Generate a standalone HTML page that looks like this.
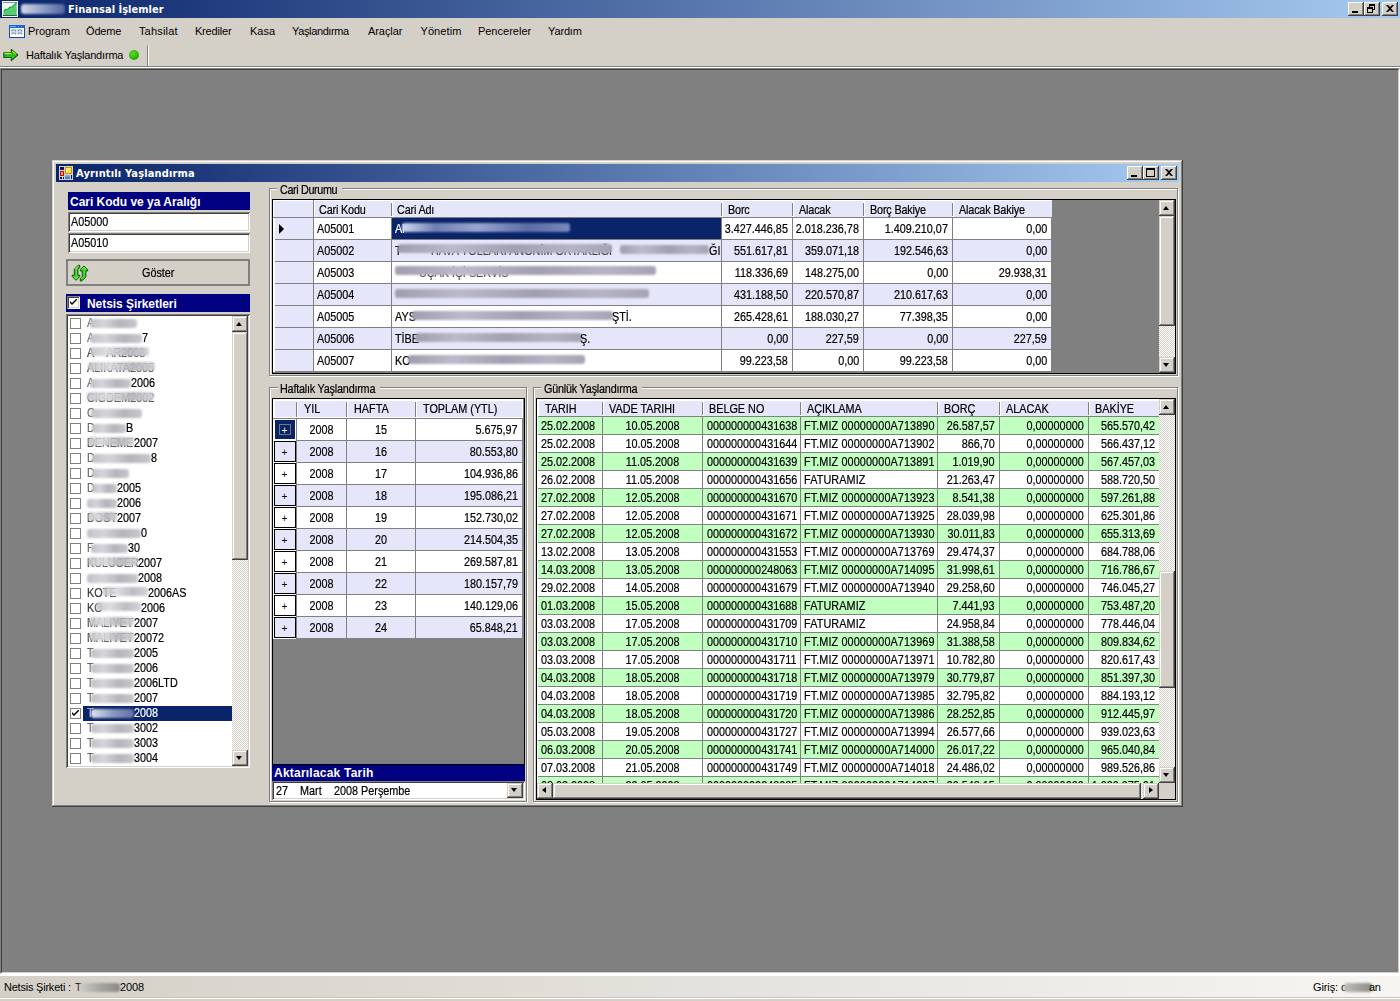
<!DOCTYPE html><html lang="tr"><head><meta charset="utf-8"><title>Finansal İşlemler</title><style>
*{box-sizing:border-box;margin:0;padding:0}
html,body{width:1400px;height:1001px;overflow:hidden;background:#d4d0c8}
body{position:relative;font-family:"Liberation Sans",sans-serif;font-size:11px;color:#000;line-height:1}
.a{position:absolute;white-space:nowrap}
.t{position:absolute;white-space:nowrap;line-height:13px;height:13px}
.th{font-family:"Liberation Sans",sans-serif;font-size:11px;letter-spacing:-0.32px}
.tb{font-family:"DejaVu Sans Condensed","Liberation Sans",sans-serif;font-weight:bold;font-size:11px;color:#fff}
.lb{position:absolute;background:#000080;color:#fff;font-weight:bold;font-size:12px;white-space:nowrap;overflow:hidden}
.lb span{position:absolute;line-height:14px;letter-spacing:-0.1px}
.g{font-size:13px;letter-spacing:0;transform:scaleX(.832);transform-origin:0 50%;-webkit-text-stroke:.22px currentColor}
.btn{position:absolute;background:#d4d0c8;box-shadow:inset -1px -1px #404040,inset 1px 1px #fff,inset -2px -2px #808080,inset 2px 2px #d4d0c8}
.sb{position:absolute;background:#d4d0c8;box-shadow:inset -1px -1px #404040,inset 1px 1px #d4d0c8,inset -2px -2px #808080,inset 2px 2px #fff}
.trk{position:absolute;background:repeating-conic-gradient(#fff 0% 25%,#d4d0c8 0% 50%) 0 0/2px 2px}
.sunk{position:absolute;background:#fff;box-shadow:inset 1px 1px #808080,inset -1px -1px #fff,inset 2px 2px #404040,inset -2px -2px #d4d0c8}
.grp{position:absolute;border:1px solid #808080;box-shadow:inset 1px 1px #fff,1px 1px #fff}
.grp>span{position:absolute;top:-6px;height:13px;background:#d4d0c8;line-height:13px;white-space:nowrap;font-size:13px}
.grp>span>i{font-style:normal;position:absolute;left:2.5px;top:0;letter-spacing:-0.25px;transform:scaleX(.832);transform-origin:0 50%;-webkit-text-stroke:.22px currentColor}
.grid{position:absolute;background:#808080;border:1px solid #000;overflow:hidden}
.c{position:absolute;white-space:nowrap;overflow:hidden;font-size:13px;letter-spacing:0}
.c i{font-style:normal;position:absolute;top:0;line-height:inherit;transform:scaleX(.832);-webkit-text-stroke:.22px currentColor}
.hl{position:absolute;background:#808080}
.bl{display:inline-block;vertical-align:middle;filter:blur(1.1px);border-radius:3px}
.tri{position:absolute;width:0;height:0}
</style></head><body>
<div class="a" style="left:0px;top:0px;width:1400px;height:18px;background:linear-gradient(90deg,#0a246a 0%,#a6caf0 100%);"></div>
<svg class="a" style="left:2px;top:1px" width="16" height="16" viewBox="0 0 16 16"><defs><linearGradient id="ai" x1="0" y1="0" x2="1" y2="1"><stop offset="0" stop-color="#e8f4f8"/><stop offset=".5" stop-color="#f8fcff"/><stop offset="1" stop-color="#d0ecd8"/></linearGradient></defs><rect width="16" height="16" fill="#fff"/><rect x="1" y="1" width="14" height="14" fill="url(#ai)"/><path d="M1.3 15V10.6L3.3 8.6L6 8L8 6L9.6 6.2L14.7 1.6V15Z" fill="#58cc74"/><path d="M1.8 10.2L3.3 8.6L6 8L8 6L9.6 6.2L14.4 1.9" stroke="#18a838" stroke-width="1.1" fill="none"/><rect x="1" y="1" width="14" height="1" fill="#707870" opacity=".8"/><rect x="1" y="14" width="14" height="1" fill="#286838"/></svg>
<div class="a" style="left:21px;top:4px;width:44px;height:10px;background:linear-gradient(90deg,#e8ecf6,#8f9fc6 60%,#5a6da6);filter:blur(1.2px);border-radius:3px;opacity:.9"></div>
<div class="t tb" style="left:68px;top:3px;letter-spacing:0.02px">Finansal İşlemler</div>
<div class="btn" style="left:1348px;top:2px;width:16px;height:14px"></div>
<div class="btn" style="left:1364px;top:2px;width:16px;height:14px"></div>
<div class="btn" style="left:1382px;top:2px;width:16px;height:14px"></div>
<div class="a" style="left:1352px;top:11px;width:6px;height:2px;background:#000;"></div>
<div class="a" style="left:1369px;top:4px;width:6px;height:6px;background:transparent;border:1px solid #000;border-top-width:2px"></div>
<div class="a" style="left:1367px;top:7px;width:6px;height:6px;background:#d4d0c8;border:1px solid #000;border-top-width:2px"></div>
<svg class="a" style="left:1386px;top:5px" width="8" height="7" viewBox="0 0 8 7"><path d="M0 0h2l2 2 2-2h2L5 3.5 8 7H6L4 5 2 7H0l3-3.5z" fill="#000"/></svg>
<svg class="a" style="left:9px;top:25px" width="16" height="13" viewBox="0 0 16 13"><rect width="16" height="13" fill="#0c48c0"/><rect x="0" y="0" width="16" height="3" fill="#1068e0"/><rect x="1" y="1" width="6" height="1" fill="#70b0f8"/><rect x="9" y="1" width="1" height="1" fill="#70b0f8"/><rect x="12" y="1" width="1" height="1" fill="#58a0f0"/><rect x="13" y="1" width="2" height="1" fill="#f02010"/><rect x="1" y="3" width="14" height="9" fill="#fff"/><rect x="2" y="4" width="12" height="5" fill="#d4ecfc"/><path d="M3 6.5V5h3.5v1.5M9 6.5V5h3.5v1.5M3 9.5V8h3.5v1.5M9 9.5V8h3.5v1.5" stroke="#8c8c90" stroke-width="1" fill="none"/></svg>
<div class="t th" style="left:28.0px;top:24.5px;letter-spacing:-0.06px">Program</div>
<div class="t th" style="left:86.0px;top:24.5px;letter-spacing:-0.15px">Ödeme</div>
<div class="t th" style="left:138.9px;top:24.5px;letter-spacing:0.19px">Tahsilat</div>
<div class="t th" style="left:194.9px;top:24.5px;letter-spacing:-0.15px">Krediler</div>
<div class="t th" style="left:249.9px;top:24.5px;letter-spacing:0.08px">Kasa</div>
<div class="t th" style="left:292.1px;top:24.5px;letter-spacing:-0.38px">Yaşlandırma</div>
<div class="t th" style="left:368.0px;top:24.5px;letter-spacing:-0.07px">Araçlar</div>
<div class="t th" style="left:420.5px;top:24.5px;letter-spacing:0.08px">Yönetim</div>
<div class="t th" style="left:477.9px;top:24.5px;letter-spacing:0.01px">Pencereler</div>
<div class="t th" style="left:548.1px;top:24.5px;letter-spacing:-0.16px">Yardım</div>
<svg class="a" style="left:3px;top:48px" width="16" height="14" viewBox="0 0 16 14"><defs><linearGradient id="ga" x1="0" y1="0" x2="0" y2="1"><stop offset="0" stop-color="#48d030"/><stop offset=".5" stop-color="#22b422"/><stop offset="1" stop-color="#58e048"/></linearGradient></defs><path d="M0.8 4.7H8.3V1.4L14.7 7L8.3 12.6V9.5H0.8Z" fill="url(#ga)" stroke="#076207" stroke-width="1.1" stroke-linejoin="round"/><path d="M1.6 5.6H8.6M9.2 3L13.2 6.5" stroke="#f2ff18" stroke-width="1" fill="none"/></svg>
<div class="t th" style="left:26px;top:48.5px;letter-spacing:-0.19px">Haftalık Yaşlandırma</div>
<div class="a" style="left:129px;top:50px;width:10px;height:10px;border-radius:50%;background:radial-gradient(circle at 40% 35%,#58e020,#2aa808 70%,#1e8a06)"></div>
<div class="a" style="left:147px;top:45px;width:1px;height:21px;background:#808080;"></div>
<div class="a" style="left:148px;top:45px;width:1px;height:21px;background:#fff;"></div>
<div class="a" style="left:0px;top:66px;width:1400px;height:1px;background:#808080;"></div>
<div class="a" style="left:0px;top:67px;width:1400px;height:1px;background:#fff;"></div>
<div class="a" style="left:0px;top:68px;width:1400px;height:906px;background:#808080;border-left:1px solid #808080;border-top:1px solid #808080;border-right:1px solid #fff;border-bottom:1px solid #fff"></div>
<div class="a" style="left:1px;top:69px;width:1398px;height:904px;background:#808080;border-left:1px solid #404040;border-top:1px solid #404040;border-right:1px solid #d4d0c8;border-bottom:1px solid #d4d0c8"></div>
<div class="a" style="left:0px;top:974px;width:1400px;height:2px;background:#fff;"></div>
<div class="a" style="left:0px;top:976px;width:1400px;height:22px;background:linear-gradient(90deg,#d4d0c8 0%,#e4e2dc 50%,#f6f5f2 100%);"></div>
<div class="a" style="left:0px;top:997px;width:1400px;height:1px;background:#c8c5bd;"></div>
<div class="a" style="left:0px;top:998px;width:1400px;height:1px;background:#fff;"></div>
<div class="a" style="left:0px;top:999px;width:1400px;height:2px;background:#d4d0c8;"></div>
<div class="t th" style="left:4px;top:980.5px;letter-spacing:-0.22px">Netsis Şirketi :</div>
<div class="t th" style="left:75px;top:980.5px;">T</div>
<div class="a" style="left:79px;top:983px;width:41px;height:9px;background:linear-gradient(90deg,#d0cec8,#a8a6a2 50%,#8c8a88);filter:blur(1.1px);border-radius:3px"></div>
<div class="t th" style="left:120px;top:980.5px;letter-spacing:-0.15px">2008</div>
<div class="t th" style="left:1313px;top:980.5px;letter-spacing:-0.1px">Giriş:</div>
<div class="t th" style="left:1341px;top:980.5px;">o</div>
<div class="a" style="left:1344px;top:983px;width:28px;height:9px;background:linear-gradient(90deg,#c0beba,#8e8c8a);filter:blur(1.1px);border-radius:3px"></div>
<div class="t th" style="left:1369px;top:980.5px;">an</div>
<div class="a" style="left:52px;top:160px;width:1131px;height:647px;background:#d4d0c8;box-shadow:inset -1px -1px #404040,inset 1px 1px #d4d0c8,inset -2px -2px #808080,inset 2px 2px #fff"></div>
<div class="a" style="left:56px;top:164px;width:1123px;height:18px;background:linear-gradient(90deg,#0a246a 0%,#a6caf0 100%);"></div>
<svg class="a" style="left:59px;top:166px" width="14" height="14" viewBox="59 166 14 14"><defs><linearGradient id="gy" x1="0" y1="0" x2="1" y2="1"><stop offset="0" stop-color="#fff4c0"/><stop offset="1" stop-color="#ffce20"/></linearGradient><linearGradient id="gb" x1="0" y1="0" x2="0" y2="1"><stop offset="0" stop-color="#8ab8f4"/><stop offset="1" stop-color="#3a6cd0"/></linearGradient></defs><rect x="59" y="166" width="14" height="14" fill="#d6d2ca"/><rect x="60" y="167" width="4" height="3" fill="#06185c"/><rect x="65" y="167" width="7" height="7" fill="#c89400"/><rect x="66" y="168" width="5" height="5" fill="url(#gy)"/><rect x="60" y="171" width="4" height="5" fill="#b81808"/><rect x="61" y="172" width="2" height="3" fill="#f08878"/><rect x="65" y="175" width="5" height="4" fill="url(#gb)"/><rect x="60" y="177" width="2" height="2" fill="#06185c"/><rect x="63" y="177" width="1" height="2" fill="#06185c"/><rect x="71" y="175" width="1" height="4" fill="#06185c"/></svg>
<div class="t tb" style="left:76px;top:167px;letter-spacing:0.16px">Ayrıntılı Yaşlandırma</div>
<div class="btn" style="left:1127px;top:166px;width:16px;height:14px"></div>
<div class="btn" style="left:1143px;top:166px;width:16px;height:14px"></div>
<div class="btn" style="left:1161px;top:166px;width:16px;height:14px"></div>
<div class="a" style="left:1131px;top:175px;width:6px;height:2px;background:#000;"></div>
<div class="a" style="left:1146px;top:168px;width:9px;height:9px;background:transparent;border:1px solid #000;border-top-width:2px"></div>
<svg class="a" style="left:1165px;top:169px" width="8" height="7" viewBox="0 0 8 7"><path d="M0 0h2l2 2 2-2h2L5 3.5 8 7H6L4 5 2 7H0l3-3.5z" fill="#000"/></svg>
<div class="lb" style="left:68px;top:192px;width:182px;height:18px"><span style="left:2px;top:3px;letter-spacing:-0.02px">Cari Kodu ve ya Aralığı</span></div>
<div class="sunk" style="left:68px;top:212px;width:182px;height:20px"></div>
<div class="t g" style="left:71px;top:215px;">A05000</div>
<div class="sunk" style="left:68px;top:233px;width:182px;height:20px"></div>
<div class="t g" style="left:71px;top:236px;">A05010</div>
<div class="a" style="left:66px;top:259px;width:184px;height:27px;background:#d4d0c8;border:2px solid #808080"></div>
<svg class="a" style="left:71px;top:264px" width="18" height="18" viewBox="71 264 18 18"><defs><linearGradient id="gr" x1="0" y1="0" x2="1" y2="0"><stop offset="0" stop-color="#0f9a14"/><stop offset=".55" stop-color="#4fdc40"/><stop offset="1" stop-color="#18a81c"/></linearGradient></defs><path d="M78.3 265.3H79.7V267.6L77.8 269.6V275.2H79.7V276.6L76 280.3L72.3 276.6V275.2H74.3V269.2Z" fill="url(#gr)" stroke="#005c04" stroke-width="1" stroke-linejoin="round"/><path d="M84 266L87.7 269.6V270.9H85.8V277L81.6 281H80.3V278.6L82.2 276.6V270.9H80.3V269.6Z" fill="url(#gr)" stroke="#005c04" stroke-width="1" stroke-linejoin="round"/><path d="M75 269.2L78.8 265.9M73.4 276.4L76 279L78.6 276.4M81.3 269.7L84 267.1L86.7 269.7M81.2 278.6L83.2 276.6" stroke="#f4ff20" stroke-width=".9" fill="none" stroke-dasharray="1 .45"/></svg>
<div class="t g" style="left:141.5px;top:266px;">Göster</div>
<div class="lb" style="left:66px;top:294px;width:184px;height:18px"><span style="left:21px;top:3px;letter-spacing:-0.06px">Netsis Şirketleri</span></div>
<div class="sunk" style="left:67px;top:296px;width:13px;height:13px"></div>
<svg class="a" style="left:70px;top:299px" width="7" height="7" viewBox="0 0 7 7"><path d="M0 2v2l2 2 5-5V-1L2 4z" fill="#000"/></svg>
<div class="sunk" style="left:66px;top:314px;width:184px;height:454px"></div>
<div class="a" style="left:70px;top:318px;width:11px;height:11px;background:#fff;border:1px solid #808080"></div>
<div class="t g" style="left:87px;top:316px;opacity:.6">A</div>
<div class="a" style="left:90px;top:319px;width:47px;height:9px;background:linear-gradient(90deg,#c0c0c6,#d4d4da 30%,#b4b4ba 65%,#c8c8ce);filter:blur(1.1px);border-radius:3px"></div>
<div class="a" style="left:70px;top:333px;width:11px;height:11px;background:#fff;border:1px solid #808080"></div>
<div class="t g" style="left:87px;top:331px;opacity:.6">A</div>
<div class="a" style="left:90px;top:334px;width:52px;height:9px;background:linear-gradient(90deg,#c0c0c6,#d4d4da 30%,#b4b4ba 65%,#c8c8ce);filter:blur(1.1px);border-radius:3px"></div>
<div class="t g" style="left:142px;top:331px;">7</div>
<div class="a" style="left:70px;top:348px;width:11px;height:11px;background:#fff;border:1px solid #808080"></div>
<div class="t g" style="left:87px;top:346px;opacity:.8;filter:blur(.3px)">A&nbsp;&nbsp;&nbsp;&nbsp;AR2008</div>
<div class="a" style="left:90px;top:347px;width:59px;height:8.5px;background:linear-gradient(90deg,#c4c4ca,#dcdce0 30%,#b8b8be 65%,#d0d0d6);filter:blur(.9px);border-radius:3px;opacity:.93"></div>
<div class="a" style="left:70px;top:363px;width:11px;height:11px;background:#fff;border:1px solid #808080"></div>
<div class="t g" style="left:87px;top:361px;opacity:.8;filter:blur(.3px)">ALIKATA2005</div>
<div class="a" style="left:88px;top:362px;width:67px;height:8.5px;background:linear-gradient(90deg,#c4c4ca,#dcdce0 30%,#b8b8be 65%,#d0d0d6);filter:blur(.9px);border-radius:3px;opacity:.93"></div>
<div class="a" style="left:70px;top:378px;width:11px;height:11px;background:#fff;border:1px solid #808080"></div>
<div class="t g" style="left:87px;top:376px;opacity:.6">A</div>
<div class="a" style="left:90px;top:379px;width:41px;height:9px;background:linear-gradient(90deg,#c0c0c6,#d4d4da 30%,#b4b4ba 65%,#c8c8ce);filter:blur(1.1px);border-radius:3px"></div>
<div class="t g" style="left:131px;top:376px;">2006</div>
<div class="a" style="left:70px;top:393px;width:11px;height:11px;background:#fff;border:1px solid #808080"></div>
<div class="t g" style="left:87px;top:391px;opacity:.8;filter:blur(.3px)">CIGDEM2002</div>
<div class="a" style="left:87px;top:392px;width:67px;height:8.5px;background:linear-gradient(90deg,#c4c4ca,#dcdce0 30%,#b8b8be 65%,#d0d0d6);filter:blur(.9px);border-radius:3px;opacity:.93"></div>
<div class="a" style="left:70px;top:408px;width:11px;height:11px;background:#fff;border:1px solid #808080"></div>
<div class="t g" style="left:87px;top:406px;opacity:.6">C</div>
<div class="a" style="left:91px;top:409px;width:51px;height:9px;background:linear-gradient(90deg,#c0c0c6,#d4d4da 30%,#b4b4ba 65%,#c8c8ce);filter:blur(1.1px);border-radius:3px"></div>
<div class="a" style="left:70px;top:423px;width:11px;height:11px;background:#fff;border:1px solid #808080"></div>
<div class="t g" style="left:87px;top:421px;opacity:.6">D</div>
<div class="a" style="left:92px;top:424px;width:34px;height:9px;background:linear-gradient(90deg,#c0c0c6,#d4d4da 30%,#b4b4ba 65%,#c8c8ce);filter:blur(1.1px);border-radius:3px"></div>
<div class="t g" style="left:125.7px;top:421px;">B</div>
<div class="a" style="left:70px;top:438px;width:11px;height:11px;background:#fff;border:1px solid #808080"></div>
<div class="t g" style="left:87px;top:436px;opacity:.8;filter:blur(.3px)">DENEME</div>
<div class="a" style="left:88px;top:437px;width:45.599999999999994px;height:8.5px;background:linear-gradient(90deg,#c4c4ca,#dcdce0 30%,#b8b8be 65%,#d0d0d6);filter:blur(.9px);border-radius:3px;opacity:.93"></div>
<div class="t g" style="left:133.6px;top:436px;">2007</div>
<div class="a" style="left:70px;top:453px;width:11px;height:11px;background:#fff;border:1px solid #808080"></div>
<div class="t g" style="left:87px;top:451px;opacity:.6">D</div>
<div class="a" style="left:92px;top:454px;width:58.69999999999999px;height:9px;background:linear-gradient(90deg,#c0c0c6,#d4d4da 30%,#b4b4ba 65%,#c8c8ce);filter:blur(1.1px);border-radius:3px"></div>
<div class="t g" style="left:150.7px;top:451px;">8</div>
<div class="a" style="left:70px;top:468px;width:11px;height:11px;background:#fff;border:1px solid #808080"></div>
<div class="t g" style="left:87px;top:466px;opacity:.6">D</div>
<div class="a" style="left:92px;top:469px;width:37px;height:9px;background:linear-gradient(90deg,#c0c0c6,#d4d4da 30%,#b4b4ba 65%,#c8c8ce);filter:blur(1.1px);border-radius:3px"></div>
<div class="a" style="left:70px;top:483px;width:11px;height:11px;background:#fff;border:1px solid #808080"></div>
<div class="t g" style="left:87px;top:481px;opacity:.6">D</div>
<div class="a" style="left:92px;top:484px;width:25px;height:9px;background:linear-gradient(90deg,#c0c0c6,#d4d4da 30%,#b4b4ba 65%,#c8c8ce);filter:blur(1.1px);border-radius:3px"></div>
<div class="t g" style="left:116.8px;top:481px;">2005</div>
<div class="a" style="left:70px;top:498px;width:11px;height:11px;background:#fff;border:1px solid #808080"></div>
<div class="a" style="left:86.5px;top:499px;width:30.5px;height:9px;background:linear-gradient(90deg,#c0c0c6,#d4d4da 30%,#b4b4ba 65%,#c8c8ce);filter:blur(1.1px);border-radius:3px"></div>
<div class="t g" style="left:116.8px;top:496px;">2006</div>
<div class="a" style="left:70px;top:513px;width:11px;height:11px;background:#fff;border:1px solid #808080"></div>
<div class="t g" style="left:87px;top:511px;opacity:.8;filter:blur(.3px)">DOST</div>
<div class="a" style="left:88px;top:512px;width:29px;height:8.5px;background:linear-gradient(90deg,#c4c4ca,#dcdce0 30%,#b8b8be 65%,#d0d0d6);filter:blur(.9px);border-radius:3px;opacity:.93"></div>
<div class="t g" style="left:116.8px;top:511px;">2007</div>
<div class="a" style="left:70px;top:528px;width:11px;height:11px;background:#fff;border:1px solid #808080"></div>
<div class="a" style="left:87px;top:529px;width:53.5px;height:9px;background:linear-gradient(90deg,#c0c0c6,#d4d4da 30%,#b4b4ba 65%,#c8c8ce);filter:blur(1.1px);border-radius:3px"></div>
<div class="t g" style="left:140.5px;top:526px;">0</div>
<div class="a" style="left:70px;top:543px;width:11px;height:11px;background:#fff;border:1px solid #808080"></div>
<div class="t g" style="left:87px;top:541px;opacity:.6">F</div>
<div class="a" style="left:91px;top:544px;width:36.5px;height:9px;background:linear-gradient(90deg,#c0c0c6,#d4d4da 30%,#b4b4ba 65%,#c8c8ce);filter:blur(1.1px);border-radius:3px"></div>
<div class="t g" style="left:127.5px;top:541px;">30</div>
<div class="a" style="left:70px;top:558px;width:11px;height:11px;background:#fff;border:1px solid #808080"></div>
<div class="t g" style="left:87px;top:556px;opacity:.8;filter:blur(.3px)">KULUCER</div>
<div class="a" style="left:88px;top:557px;width:50px;height:8.5px;background:linear-gradient(90deg,#c4c4ca,#dcdce0 30%,#b8b8be 65%,#d0d0d6);filter:blur(.9px);border-radius:3px;opacity:.93"></div>
<div class="t g" style="left:138px;top:556px;">2007</div>
<div class="a" style="left:70px;top:573px;width:11px;height:11px;background:#fff;border:1px solid #808080"></div>
<div class="a" style="left:87px;top:574px;width:51px;height:9px;background:linear-gradient(90deg,#c0c0c6,#d4d4da 30%,#b4b4ba 65%,#c8c8ce);filter:blur(1.1px);border-radius:3px"></div>
<div class="t g" style="left:138px;top:571px;">2008</div>
<div class="a" style="left:70px;top:588px;width:11px;height:11px;background:#fff;border:1px solid #808080"></div>
<div class="t g" style="left:87px;top:586px;opacity:.8;filter:blur(.3px)">KOTE</div>
<div class="a" style="left:103px;top:587px;width:45px;height:8.5px;background:linear-gradient(90deg,#c4c4ca,#dcdce0 30%,#b8b8be 65%,#d0d0d6);filter:blur(.9px);border-radius:3px;opacity:.93"></div>
<div class="t g" style="left:148px;top:586px;">2006AS</div>
<div class="a" style="left:70px;top:603px;width:11px;height:11px;background:#fff;border:1px solid #808080"></div>
<div class="t g" style="left:87px;top:601px;opacity:.8;filter:blur(.3px)">KO</div>
<div class="a" style="left:96px;top:602px;width:44.5px;height:8.5px;background:linear-gradient(90deg,#c4c4ca,#dcdce0 30%,#b8b8be 65%,#d0d0d6);filter:blur(.9px);border-radius:3px;opacity:.93"></div>
<div class="t g" style="left:140.5px;top:601px;">2006</div>
<div class="a" style="left:70px;top:618px;width:11px;height:11px;background:#fff;border:1px solid #808080"></div>
<div class="t g" style="left:87px;top:616px;opacity:.8;filter:blur(.3px)">MALIYET</div>
<div class="a" style="left:89px;top:617px;width:44.599999999999994px;height:8.5px;background:linear-gradient(90deg,#c4c4ca,#dcdce0 30%,#b8b8be 65%,#d0d0d6);filter:blur(.9px);border-radius:3px;opacity:.93"></div>
<div class="t g" style="left:133.6px;top:616px;">2007</div>
<div class="a" style="left:70px;top:633px;width:11px;height:11px;background:#fff;border:1px solid #808080"></div>
<div class="t g" style="left:87px;top:631px;opacity:.8;filter:blur(.3px)">MALIYET</div>
<div class="a" style="left:89px;top:632px;width:44.599999999999994px;height:8.5px;background:linear-gradient(90deg,#c4c4ca,#dcdce0 30%,#b8b8be 65%,#d0d0d6);filter:blur(.9px);border-radius:3px;opacity:.93"></div>
<div class="t g" style="left:133.6px;top:631px;">20072</div>
<div class="a" style="left:70px;top:648px;width:11px;height:11px;background:#fff;border:1px solid #808080"></div>
<div class="t g" style="left:87px;top:646px;opacity:.6">T</div>
<div class="a" style="left:91px;top:649px;width:42.599999999999994px;height:9px;background:linear-gradient(90deg,#c0c0c6,#d4d4da 30%,#b4b4ba 65%,#c8c8ce);filter:blur(1.1px);border-radius:3px"></div>
<div class="t g" style="left:133.6px;top:646px;">2005</div>
<div class="a" style="left:70px;top:663px;width:11px;height:11px;background:#fff;border:1px solid #808080"></div>
<div class="t g" style="left:87px;top:661px;opacity:.6">T</div>
<div class="a" style="left:91px;top:664px;width:42.599999999999994px;height:9px;background:linear-gradient(90deg,#c0c0c6,#d4d4da 30%,#b4b4ba 65%,#c8c8ce);filter:blur(1.1px);border-radius:3px"></div>
<div class="t g" style="left:133.6px;top:661px;">2006</div>
<div class="a" style="left:70px;top:678px;width:11px;height:11px;background:#fff;border:1px solid #808080"></div>
<div class="t g" style="left:87px;top:676px;opacity:.6">T</div>
<div class="a" style="left:91px;top:679px;width:42.599999999999994px;height:9px;background:linear-gradient(90deg,#c0c0c6,#d4d4da 30%,#b4b4ba 65%,#c8c8ce);filter:blur(1.1px);border-radius:3px"></div>
<div class="t g" style="left:133.6px;top:676px;">2006LTD</div>
<div class="a" style="left:70px;top:693px;width:11px;height:11px;background:#fff;border:1px solid #808080"></div>
<div class="t g" style="left:87px;top:691px;opacity:.6">T</div>
<div class="a" style="left:91px;top:694px;width:42.599999999999994px;height:9px;background:linear-gradient(90deg,#c0c0c6,#d4d4da 30%,#b4b4ba 65%,#c8c8ce);filter:blur(1.1px);border-radius:3px"></div>
<div class="t g" style="left:133.6px;top:691px;">2007</div>
<div class="a" style="left:83px;top:706px;width:149px;height:15px;background:#0a246a;"></div>
<div class="a" style="left:70px;top:708px;width:11px;height:11px;background:#fff;border:1px solid #808080"></div>
<svg class="a" style="left:72px;top:710px" width="7" height="7" viewBox="0 0 7 7"><path d="M0 2v2l2 2 5-5V-1L2 4z" fill="#000"/></svg>
<div class="t g" style="left:87px;top:706px;color:#fff;opacity:.6">T</div>
<div class="a" style="left:91px;top:709px;width:42.599999999999994px;height:9px;background:linear-gradient(90deg,#e0e4f0,#8c98c0 50%,#6070a8);filter:blur(1.1px);border-radius:3px"></div>
<div class="t g" style="left:133.6px;top:706px;color:#fff">2008</div>
<div class="a" style="left:70px;top:723px;width:11px;height:11px;background:#fff;border:1px solid #808080"></div>
<div class="t g" style="left:87px;top:721px;opacity:.6">T</div>
<div class="a" style="left:91px;top:724px;width:42.599999999999994px;height:9px;background:linear-gradient(90deg,#c0c0c6,#d4d4da 30%,#b4b4ba 65%,#c8c8ce);filter:blur(1.1px);border-radius:3px"></div>
<div class="t g" style="left:133.6px;top:721px;">3002</div>
<div class="a" style="left:70px;top:738px;width:11px;height:11px;background:#fff;border:1px solid #808080"></div>
<div class="t g" style="left:87px;top:736px;opacity:.6">T</div>
<div class="a" style="left:91px;top:739px;width:42.599999999999994px;height:9px;background:linear-gradient(90deg,#c0c0c6,#d4d4da 30%,#b4b4ba 65%,#c8c8ce);filter:blur(1.1px);border-radius:3px"></div>
<div class="t g" style="left:133.6px;top:736px;">3003</div>
<div class="a" style="left:70px;top:753px;width:11px;height:11px;background:#fff;border:1px solid #808080"></div>
<div class="t g" style="left:87px;top:751px;opacity:.6">T</div>
<div class="a" style="left:91px;top:754px;width:42.599999999999994px;height:9px;background:linear-gradient(90deg,#c0c0c6,#d4d4da 30%,#b4b4ba 65%,#c8c8ce);filter:blur(1.1px);border-radius:3px"></div>
<div class="t g" style="left:133.6px;top:751px;">3004</div>
<div class="trk" style="left:232px;top:316px;width:16px;height:450px"></div>
<div class="sb" style="left:232px;top:316px;width:16px;height:16px"></div>
<div class="tri" style="left:236px;top:322px;border-left:3.5px solid transparent;border-right:3.5px solid transparent;border-bottom:4px solid #000"></div>
<div class="sb" style="left:232px;top:750px;width:16px;height:16px"></div>
<div class="tri" style="left:236px;top:756px;border-left:3.5px solid transparent;border-right:3.5px solid transparent;border-top:4px solid #000"></div>
<div class="sb" style="left:232px;top:332px;width:16px;height:228px"></div>
<div class="grp" style="left:269px;top:188px;width:909px;height:188px"><span style="left:7px;width:65px"><i style="letter-spacing:-0.45px">Cari Durumu</i></span></div>
<div class="grp" style="left:269px;top:387px;width:258px;height:415px"><span style="left:8px;width:102px"><i style="left:1.5px">Haftalık Yaşlandırma</i></span></div>
<div class="grp" style="left:533px;top:387px;width:645px;height:415px"><span style="left:7px;width:101px"><i>Günlük Yaşlandırma</i></span></div>
<div class="a" style="left:272px;top:199px;width:904px;height:175px;background:#808080;border:1px solid #000"></div>
<div class="a" style="left:273px;top:200px;width:779px;height:17px;background:#fff;"></div>
<div class="c" style="left:274px;top:201px;width:39px;height:16px;background:#e6e6fa;line-height:18px;color:#000;letter-spacing:-0.2px;"><i style="left:4px;transform-origin:0 50%"></i></div>
<div class="a" style="left:313px;top:200px;width:1px;height:17px;background:#808080;"></div>
<div class="c" style="left:315px;top:201px;width:76px;height:16px;background:#e6e6fa;line-height:18px;color:#000;letter-spacing:-0.2px;"><i style="left:4px;transform-origin:0 50%">Cari Kodu</i></div>
<div class="a" style="left:391px;top:203px;width:1px;height:13px;background:#808080;"></div>
<div class="c" style="left:393px;top:201px;width:328px;height:16px;background:#e6e6fa;line-height:18px;color:#000;letter-spacing:-0.2px;"><i style="left:4px;transform-origin:0 50%">Cari Adı</i></div>
<div class="a" style="left:721px;top:203px;width:1px;height:13px;background:#808080;"></div>
<div class="c" style="left:723px;top:201px;width:69px;height:16px;background:#e6e6fa;line-height:18px;color:#000;letter-spacing:-0.2px;"><i style="left:5px;transform-origin:0 50%">Borc</i></div>
<div class="a" style="left:792px;top:203px;width:1px;height:13px;background:#808080;"></div>
<div class="c" style="left:794px;top:201px;width:69px;height:16px;background:#e6e6fa;line-height:18px;color:#000;letter-spacing:-0.2px;"><i style="left:5px;transform-origin:0 50%">Alacak</i></div>
<div class="a" style="left:863px;top:203px;width:1px;height:13px;background:#808080;"></div>
<div class="c" style="left:865px;top:201px;width:87px;height:16px;background:#e6e6fa;line-height:18px;color:#000;letter-spacing:-0.2px;"><i style="left:5px;transform-origin:0 50%">Borç Bakiye</i></div>
<div class="a" style="left:952px;top:203px;width:1px;height:13px;background:#808080;"></div>
<div class="c" style="left:954px;top:201px;width:98px;height:16px;background:#e6e6fa;line-height:18px;color:#000;letter-spacing:-0.2px;"><i style="left:5px;transform-origin:0 50%">Alacak Bakiye</i></div>
<div class="a" style="left:273px;top:217px;width:779px;height:1px;background:#808080;"></div>
<div class="a" style="left:273px;top:218px;width:2px;height:22px;background:#fff;"></div>
<div class="a" style="left:275px;top:218px;width:38px;height:21px;background:#e6e6fa;"></div>
<div class="a" style="left:313px;top:218px;width:1px;height:22px;background:#808080;"></div>
<div class="c" style="left:314px;top:218px;width:77px;height:21px;background:#fff;line-height:21px;color:#000;"><i style="left:3px;transform-origin:0 50%">A05001</i></div>
<div class="a" style="left:391px;top:218px;width:1px;height:22px;background:#808080;"></div>
<div class="c" style="left:392px;top:218px;width:329px;height:21px;background:#0a246a;line-height:21px;color:#fff;"><i style="left:3px;transform-origin:0 50%">Al</i><b class="bl" style="position:absolute;left:10px;top:5px;width:168px;height:9px;background:linear-gradient(90deg,#d0d8f0,#7080b4 20%,#9aa6d0 45%,#5c6ca4 75%,#7888bc)"></b></div>
<div class="a" style="left:721px;top:218px;width:1px;height:22px;background:#808080;"></div>
<div class="c" style="left:722px;top:218px;width:70px;height:21px;background:#fff;line-height:21px;color:#000;"><i style="right:4px;transform-origin:100% 50%">3.427.446,85</i></div>
<div class="a" style="left:792px;top:218px;width:1px;height:22px;background:#808080;"></div>
<div class="c" style="left:793px;top:218px;width:70px;height:21px;background:#fff;line-height:21px;color:#000;"><i style="right:4px;transform-origin:100% 50%">2.018.236,78</i></div>
<div class="a" style="left:863px;top:218px;width:1px;height:22px;background:#808080;"></div>
<div class="c" style="left:864px;top:218px;width:88px;height:21px;background:#fff;line-height:21px;color:#000;"><i style="right:4px;transform-origin:100% 50%">1.409.210,07</i></div>
<div class="a" style="left:952px;top:218px;width:1px;height:22px;background:#808080;"></div>
<div class="c" style="left:953px;top:218px;width:98px;height:21px;background:#fff;line-height:21px;color:#000;"><i style="right:4px;transform-origin:100% 50%">0,00</i></div>
<div class="a" style="left:314px;top:239px;width:738px;height:1px;background:#808080;"></div>
<div class="a" style="left:273px;top:240px;width:2px;height:22px;background:#fff;"></div>
<div class="a" style="left:275px;top:240px;width:38px;height:21px;background:#e6e6fa;"></div>
<div class="a" style="left:276px;top:239px;width:36px;height:1px;background:#808080;"></div>
<div class="a" style="left:313px;top:239px;width:1px;height:22px;background:#808080;"></div>
<div class="c" style="left:314px;top:240px;width:77px;height:21px;background:#e6e6fa;line-height:21px;color:#000;"><i style="left:3px;transform-origin:0 50%">A05002</i></div>
<div class="a" style="left:391px;top:240px;width:1px;height:22px;background:#808080;"></div>
<div class="c" style="left:392px;top:240px;width:329px;height:21px;background:#e6e6fa;line-height:21px;color:#000;"><i style="left:3px;transform-origin:0 50%">T</i><i style="left:39px;transform-origin:0 50%;opacity:0.75">HAVA YOLLARI ANONİM ORTAKLIĞI</i><b class="bl" style="position:absolute;left:6px;top:3.5px;width:214px;height:9px;background:linear-gradient(90deg,#a09eae,#bcbaca 25%,#a2a0b0 55%,#b6b4c4 80%,#a6a4b4)"></b><b class="bl" style="position:absolute;left:228px;top:5px;width:89px;height:9px;background:linear-gradient(90deg,#a09eae,#bcbaca 25%,#a2a0b0 55%,#b6b4c4 80%,#a6a4b4)"></b><i style="left:316.6px;transform-origin:0 50%">ĞI</i></div>
<div class="a" style="left:721px;top:240px;width:1px;height:22px;background:#808080;"></div>
<div class="c" style="left:722px;top:240px;width:70px;height:21px;background:#e6e6fa;line-height:21px;color:#000;"><i style="right:4px;transform-origin:100% 50%">551.617,81</i></div>
<div class="a" style="left:792px;top:240px;width:1px;height:22px;background:#808080;"></div>
<div class="c" style="left:793px;top:240px;width:70px;height:21px;background:#e6e6fa;line-height:21px;color:#000;"><i style="right:4px;transform-origin:100% 50%">359.071,18</i></div>
<div class="a" style="left:863px;top:240px;width:1px;height:22px;background:#808080;"></div>
<div class="c" style="left:864px;top:240px;width:88px;height:21px;background:#e6e6fa;line-height:21px;color:#000;"><i style="right:4px;transform-origin:100% 50%">192.546,63</i></div>
<div class="a" style="left:952px;top:240px;width:1px;height:22px;background:#808080;"></div>
<div class="c" style="left:953px;top:240px;width:98px;height:21px;background:#e6e6fa;line-height:21px;color:#000;"><i style="right:4px;transform-origin:100% 50%">0,00</i></div>
<div class="a" style="left:314px;top:261px;width:738px;height:1px;background:#808080;"></div>
<div class="a" style="left:273px;top:262px;width:2px;height:22px;background:#fff;"></div>
<div class="a" style="left:275px;top:262px;width:38px;height:21px;background:#e6e6fa;"></div>
<div class="a" style="left:276px;top:261px;width:36px;height:1px;background:#808080;"></div>
<div class="a" style="left:313px;top:261px;width:1px;height:22px;background:#808080;"></div>
<div class="c" style="left:314px;top:262px;width:77px;height:21px;background:#fff;line-height:21px;color:#000;"><i style="left:3px;transform-origin:0 50%">A05003</i></div>
<div class="a" style="left:391px;top:262px;width:1px;height:22px;background:#808080;"></div>
<div class="c" style="left:392px;top:262px;width:329px;height:21px;background:#fff;line-height:21px;color:#000;"><i style="left:27px;transform-origin:0 50%;opacity:0.7">UÇAK İÇİ SERVİS</i><b class="bl" style="position:absolute;left:3px;top:4px;width:261px;height:9px;background:linear-gradient(90deg,#a09eae,#bcbaca 25%,#a2a0b0 55%,#b6b4c4 80%,#a6a4b4)"></b></div>
<div class="a" style="left:721px;top:262px;width:1px;height:22px;background:#808080;"></div>
<div class="c" style="left:722px;top:262px;width:70px;height:21px;background:#fff;line-height:21px;color:#000;"><i style="right:4px;transform-origin:100% 50%">118.336,69</i></div>
<div class="a" style="left:792px;top:262px;width:1px;height:22px;background:#808080;"></div>
<div class="c" style="left:793px;top:262px;width:70px;height:21px;background:#fff;line-height:21px;color:#000;"><i style="right:4px;transform-origin:100% 50%">148.275,00</i></div>
<div class="a" style="left:863px;top:262px;width:1px;height:22px;background:#808080;"></div>
<div class="c" style="left:864px;top:262px;width:88px;height:21px;background:#fff;line-height:21px;color:#000;"><i style="right:4px;transform-origin:100% 50%">0,00</i></div>
<div class="a" style="left:952px;top:262px;width:1px;height:22px;background:#808080;"></div>
<div class="c" style="left:953px;top:262px;width:98px;height:21px;background:#fff;line-height:21px;color:#000;"><i style="right:4px;transform-origin:100% 50%">29.938,31</i></div>
<div class="a" style="left:314px;top:283px;width:738px;height:1px;background:#808080;"></div>
<div class="a" style="left:273px;top:284px;width:2px;height:22px;background:#fff;"></div>
<div class="a" style="left:275px;top:284px;width:38px;height:21px;background:#e6e6fa;"></div>
<div class="a" style="left:276px;top:283px;width:36px;height:1px;background:#808080;"></div>
<div class="a" style="left:313px;top:283px;width:1px;height:22px;background:#808080;"></div>
<div class="c" style="left:314px;top:284px;width:77px;height:21px;background:#e6e6fa;line-height:21px;color:#000;"><i style="left:3px;transform-origin:0 50%">A05004</i></div>
<div class="a" style="left:391px;top:284px;width:1px;height:22px;background:#808080;"></div>
<div class="c" style="left:392px;top:284px;width:329px;height:21px;background:#e6e6fa;line-height:21px;color:#000;"><b class="bl" style="position:absolute;left:3px;top:5px;width:254px;height:9px;background:linear-gradient(90deg,#a09eae,#bcbaca 25%,#a2a0b0 55%,#b6b4c4 80%,#a6a4b4)"></b></div>
<div class="a" style="left:721px;top:284px;width:1px;height:22px;background:#808080;"></div>
<div class="c" style="left:722px;top:284px;width:70px;height:21px;background:#e6e6fa;line-height:21px;color:#000;"><i style="right:4px;transform-origin:100% 50%">431.188,50</i></div>
<div class="a" style="left:792px;top:284px;width:1px;height:22px;background:#808080;"></div>
<div class="c" style="left:793px;top:284px;width:70px;height:21px;background:#e6e6fa;line-height:21px;color:#000;"><i style="right:4px;transform-origin:100% 50%">220.570,87</i></div>
<div class="a" style="left:863px;top:284px;width:1px;height:22px;background:#808080;"></div>
<div class="c" style="left:864px;top:284px;width:88px;height:21px;background:#e6e6fa;line-height:21px;color:#000;"><i style="right:4px;transform-origin:100% 50%">210.617,63</i></div>
<div class="a" style="left:952px;top:284px;width:1px;height:22px;background:#808080;"></div>
<div class="c" style="left:953px;top:284px;width:98px;height:21px;background:#e6e6fa;line-height:21px;color:#000;"><i style="right:4px;transform-origin:100% 50%">0,00</i></div>
<div class="a" style="left:314px;top:305px;width:738px;height:1px;background:#808080;"></div>
<div class="a" style="left:273px;top:306px;width:2px;height:22px;background:#fff;"></div>
<div class="a" style="left:275px;top:306px;width:38px;height:21px;background:#e6e6fa;"></div>
<div class="a" style="left:276px;top:305px;width:36px;height:1px;background:#808080;"></div>
<div class="a" style="left:313px;top:305px;width:1px;height:22px;background:#808080;"></div>
<div class="c" style="left:314px;top:306px;width:77px;height:21px;background:#fff;line-height:21px;color:#000;"><i style="left:3px;transform-origin:0 50%">A05005</i></div>
<div class="a" style="left:391px;top:306px;width:1px;height:22px;background:#808080;"></div>
<div class="c" style="left:392px;top:306px;width:329px;height:21px;background:#fff;line-height:21px;color:#000;"><i style="left:3px;transform-origin:0 50%">AYS</i><b class="bl" style="position:absolute;left:20px;top:5px;width:201px;height:9px;background:linear-gradient(90deg,#a09eae,#bcbaca 25%,#a2a0b0 55%,#b6b4c4 80%,#a6a4b4)"></b><i style="left:219.5px;transform-origin:0 50%">ŞTİ.</i></div>
<div class="a" style="left:721px;top:306px;width:1px;height:22px;background:#808080;"></div>
<div class="c" style="left:722px;top:306px;width:70px;height:21px;background:#fff;line-height:21px;color:#000;"><i style="right:4px;transform-origin:100% 50%">265.428,61</i></div>
<div class="a" style="left:792px;top:306px;width:1px;height:22px;background:#808080;"></div>
<div class="c" style="left:793px;top:306px;width:70px;height:21px;background:#fff;line-height:21px;color:#000;"><i style="right:4px;transform-origin:100% 50%">188.030,27</i></div>
<div class="a" style="left:863px;top:306px;width:1px;height:22px;background:#808080;"></div>
<div class="c" style="left:864px;top:306px;width:88px;height:21px;background:#fff;line-height:21px;color:#000;"><i style="right:4px;transform-origin:100% 50%">77.398,35</i></div>
<div class="a" style="left:952px;top:306px;width:1px;height:22px;background:#808080;"></div>
<div class="c" style="left:953px;top:306px;width:98px;height:21px;background:#fff;line-height:21px;color:#000;"><i style="right:4px;transform-origin:100% 50%">0,00</i></div>
<div class="a" style="left:314px;top:327px;width:738px;height:1px;background:#808080;"></div>
<div class="a" style="left:273px;top:328px;width:2px;height:22px;background:#fff;"></div>
<div class="a" style="left:275px;top:328px;width:38px;height:21px;background:#e6e6fa;"></div>
<div class="a" style="left:276px;top:327px;width:36px;height:1px;background:#808080;"></div>
<div class="a" style="left:313px;top:327px;width:1px;height:22px;background:#808080;"></div>
<div class="c" style="left:314px;top:328px;width:77px;height:21px;background:#e6e6fa;line-height:21px;color:#000;"><i style="left:3px;transform-origin:0 50%">A05006</i></div>
<div class="a" style="left:391px;top:328px;width:1px;height:22px;background:#808080;"></div>
<div class="c" style="left:392px;top:328px;width:329px;height:21px;background:#e6e6fa;line-height:21px;color:#000;"><i style="left:3px;transform-origin:0 50%">TİBE</i><b class="bl" style="position:absolute;left:23px;top:5px;width:167px;height:9px;background:linear-gradient(90deg,#a09eae,#bcbaca 25%,#a2a0b0 55%,#b6b4c4 80%,#a6a4b4)"></b><i style="left:188px;transform-origin:0 50%">Ş.</i></div>
<div class="a" style="left:721px;top:328px;width:1px;height:22px;background:#808080;"></div>
<div class="c" style="left:722px;top:328px;width:70px;height:21px;background:#e6e6fa;line-height:21px;color:#000;"><i style="right:4px;transform-origin:100% 50%">0,00</i></div>
<div class="a" style="left:792px;top:328px;width:1px;height:22px;background:#808080;"></div>
<div class="c" style="left:793px;top:328px;width:70px;height:21px;background:#e6e6fa;line-height:21px;color:#000;"><i style="right:4px;transform-origin:100% 50%">227,59</i></div>
<div class="a" style="left:863px;top:328px;width:1px;height:22px;background:#808080;"></div>
<div class="c" style="left:864px;top:328px;width:88px;height:21px;background:#e6e6fa;line-height:21px;color:#000;"><i style="right:4px;transform-origin:100% 50%">0,00</i></div>
<div class="a" style="left:952px;top:328px;width:1px;height:22px;background:#808080;"></div>
<div class="c" style="left:953px;top:328px;width:98px;height:21px;background:#e6e6fa;line-height:21px;color:#000;"><i style="right:4px;transform-origin:100% 50%">227,59</i></div>
<div class="a" style="left:314px;top:349px;width:738px;height:1px;background:#808080;"></div>
<div class="a" style="left:273px;top:350px;width:2px;height:22px;background:#fff;"></div>
<div class="a" style="left:275px;top:350px;width:38px;height:21px;background:#e6e6fa;"></div>
<div class="a" style="left:276px;top:349px;width:36px;height:1px;background:#808080;"></div>
<div class="a" style="left:313px;top:349px;width:1px;height:22px;background:#808080;"></div>
<div class="c" style="left:314px;top:350px;width:77px;height:21px;background:#fff;line-height:21px;color:#000;"><i style="left:3px;transform-origin:0 50%">A05007</i></div>
<div class="a" style="left:391px;top:350px;width:1px;height:22px;background:#808080;"></div>
<div class="c" style="left:392px;top:350px;width:329px;height:21px;background:#fff;line-height:21px;color:#000;"><i style="left:3px;transform-origin:0 50%">KO</i><b class="bl" style="position:absolute;left:16px;top:5px;width:177px;height:9px;background:linear-gradient(90deg,#a09eae,#bcbaca 25%,#a2a0b0 55%,#b6b4c4 80%,#a6a4b4)"></b></div>
<div class="a" style="left:721px;top:350px;width:1px;height:22px;background:#808080;"></div>
<div class="c" style="left:722px;top:350px;width:70px;height:21px;background:#fff;line-height:21px;color:#000;"><i style="right:4px;transform-origin:100% 50%">99.223,58</i></div>
<div class="a" style="left:792px;top:350px;width:1px;height:22px;background:#808080;"></div>
<div class="c" style="left:793px;top:350px;width:70px;height:21px;background:#fff;line-height:21px;color:#000;"><i style="right:4px;transform-origin:100% 50%">0,00</i></div>
<div class="a" style="left:863px;top:350px;width:1px;height:22px;background:#808080;"></div>
<div class="c" style="left:864px;top:350px;width:88px;height:21px;background:#fff;line-height:21px;color:#000;"><i style="right:4px;transform-origin:100% 50%">99.223,58</i></div>
<div class="a" style="left:952px;top:350px;width:1px;height:22px;background:#808080;"></div>
<div class="c" style="left:953px;top:350px;width:98px;height:21px;background:#fff;line-height:21px;color:#000;"><i style="right:4px;transform-origin:100% 50%">0,00</i></div>
<div class="a" style="left:314px;top:371px;width:738px;height:1px;background:#808080;"></div>
<div class="a" style="left:276px;top:371px;width:36px;height:1px;background:#808080;"></div>
<div class="tri" style="left:279px;top:224px;border-top:5px solid transparent;border-bottom:5px solid transparent;border-left:5px solid #000"></div>
<div class="trk" style="left:1159px;top:200px;width:16px;height:173px"></div>
<div class="sb" style="left:1159px;top:200px;width:16px;height:16px"></div>
<div class="tri" style="left:1163px;top:206px;border-left:3.5px solid transparent;border-right:3.5px solid transparent;border-bottom:4px solid #000"></div>
<div class="sb" style="left:1159px;top:357px;width:16px;height:16px"></div>
<div class="tri" style="left:1163px;top:363px;border-left:3.5px solid transparent;border-right:3.5px solid transparent;border-top:4px solid #000"></div>
<div class="sb" style="left:1159px;top:216px;width:16px;height:110px"></div>
<div class="a" style="left:272px;top:398px;width:253px;height:367px;background:#808080;border:1px solid #000"></div>
<div class="a" style="left:273px;top:399px;width:250px;height:19px;background:#fff;"></div>
<div class="c" style="left:275px;top:401px;width:21px;height:16px;background:#e6e6fa;line-height:16px;color:#000;"><i style="left:6px;transform-origin:0 50%"></i></div>
<div class="a" style="left:296px;top:402px;width:1px;height:15px;background:#808080;"></div>
<div class="c" style="left:298px;top:401px;width:48px;height:16px;background:#e6e6fa;line-height:16px;color:#000;"><i style="left:6px;transform-origin:0 50%">YIL</i></div>
<div class="a" style="left:346px;top:402px;width:1px;height:15px;background:#808080;"></div>
<div class="c" style="left:348px;top:401px;width:67px;height:16px;background:#e6e6fa;line-height:16px;color:#000;"><i style="left:6px;transform-origin:0 50%">HAFTA</i></div>
<div class="a" style="left:415px;top:402px;width:1px;height:15px;background:#808080;"></div>
<div class="c" style="left:417px;top:401px;width:105px;height:16px;background:#e6e6fa;line-height:16px;color:#000;"><i style="left:6px;transform-origin:0 50%">TOPLAM (YTL)</i></div>
<div class="a" style="left:273px;top:418px;width:250px;height:1px;background:#808080;"></div>
<div class="a" style="left:273px;top:419px;width:23px;height:21px;background:#fff;"></div>
<div class="a" style="left:275px;top:420px;width:20px;height:19px;background:#0a246a;"></div>
<div class="a" style="left:279px;top:424px;width:12px;height:11px;background:transparent;border:1px solid #7c7468"></div>
<div class="a" style="left:275px;top:422px;width:19px;height:17px;line-height:17px;color:#fff;text-align:center;font-size:10px">+</div>
<div class="c" style="left:297px;top:419px;width:49px;height:21px;background:#fff;line-height:21px;color:#000;"><i style="left:0;right:0;text-align:center;transform-origin:50% 50%">2008</i></div>
<div class="a" style="left:346px;top:419px;width:1px;height:22px;background:#808080;"></div>
<div class="c" style="left:347px;top:419px;width:68px;height:21px;background:#fff;line-height:21px;color:#000;"><i style="left:0;right:0;text-align:center;transform-origin:50% 50%">15</i></div>
<div class="a" style="left:415px;top:419px;width:1px;height:22px;background:#808080;"></div>
<div class="c" style="left:416px;top:419px;width:106px;height:21px;background:#fff;line-height:21px;color:#000;"><i style="right:4px;transform-origin:100% 50%">5.675,97</i></div>
<div class="a" style="left:522px;top:419px;width:1px;height:22px;background:#808080;"></div>
<div class="a" style="left:297px;top:440px;width:226px;height:1px;background:#808080;"></div>
<div class="a" style="left:273px;top:440px;width:23px;height:23px;background:#fff;"></div>
<div class="a" style="left:274px;top:441px;width:22px;height:21px;background:#e6e6fa;border:1px solid #000"></div>
<div class="a" style="left:275px;top:444px;width:19px;height:17px;line-height:17px;text-align:center;font-size:10px">+</div>
<div class="c" style="left:297px;top:441px;width:49px;height:21px;background:#e6e6fa;line-height:21px;color:#000;"><i style="left:0;right:0;text-align:center;transform-origin:50% 50%">2008</i></div>
<div class="a" style="left:346px;top:441px;width:1px;height:22px;background:#808080;"></div>
<div class="c" style="left:347px;top:441px;width:68px;height:21px;background:#e6e6fa;line-height:21px;color:#000;"><i style="left:0;right:0;text-align:center;transform-origin:50% 50%">16</i></div>
<div class="a" style="left:415px;top:441px;width:1px;height:22px;background:#808080;"></div>
<div class="c" style="left:416px;top:441px;width:106px;height:21px;background:#e6e6fa;line-height:21px;color:#000;"><i style="right:4px;transform-origin:100% 50%">80.553,80</i></div>
<div class="a" style="left:522px;top:441px;width:1px;height:22px;background:#808080;"></div>
<div class="a" style="left:297px;top:462px;width:226px;height:1px;background:#808080;"></div>
<div class="a" style="left:273px;top:462px;width:23px;height:23px;background:#fff;"></div>
<div class="a" style="left:274px;top:463px;width:22px;height:21px;background:#fff;border:1px solid #000"></div>
<div class="a" style="left:275px;top:466px;width:19px;height:17px;line-height:17px;text-align:center;font-size:10px">+</div>
<div class="c" style="left:297px;top:463px;width:49px;height:21px;background:#fff;line-height:21px;color:#000;"><i style="left:0;right:0;text-align:center;transform-origin:50% 50%">2008</i></div>
<div class="a" style="left:346px;top:463px;width:1px;height:22px;background:#808080;"></div>
<div class="c" style="left:347px;top:463px;width:68px;height:21px;background:#fff;line-height:21px;color:#000;"><i style="left:0;right:0;text-align:center;transform-origin:50% 50%">17</i></div>
<div class="a" style="left:415px;top:463px;width:1px;height:22px;background:#808080;"></div>
<div class="c" style="left:416px;top:463px;width:106px;height:21px;background:#fff;line-height:21px;color:#000;"><i style="right:4px;transform-origin:100% 50%">104.936,86</i></div>
<div class="a" style="left:522px;top:463px;width:1px;height:22px;background:#808080;"></div>
<div class="a" style="left:297px;top:484px;width:226px;height:1px;background:#808080;"></div>
<div class="a" style="left:273px;top:484px;width:23px;height:23px;background:#fff;"></div>
<div class="a" style="left:274px;top:485px;width:22px;height:21px;background:#e6e6fa;border:1px solid #000"></div>
<div class="a" style="left:275px;top:488px;width:19px;height:17px;line-height:17px;text-align:center;font-size:10px">+</div>
<div class="c" style="left:297px;top:485px;width:49px;height:21px;background:#e6e6fa;line-height:21px;color:#000;"><i style="left:0;right:0;text-align:center;transform-origin:50% 50%">2008</i></div>
<div class="a" style="left:346px;top:485px;width:1px;height:22px;background:#808080;"></div>
<div class="c" style="left:347px;top:485px;width:68px;height:21px;background:#e6e6fa;line-height:21px;color:#000;"><i style="left:0;right:0;text-align:center;transform-origin:50% 50%">18</i></div>
<div class="a" style="left:415px;top:485px;width:1px;height:22px;background:#808080;"></div>
<div class="c" style="left:416px;top:485px;width:106px;height:21px;background:#e6e6fa;line-height:21px;color:#000;"><i style="right:4px;transform-origin:100% 50%">195.086,21</i></div>
<div class="a" style="left:522px;top:485px;width:1px;height:22px;background:#808080;"></div>
<div class="a" style="left:297px;top:506px;width:226px;height:1px;background:#808080;"></div>
<div class="a" style="left:273px;top:506px;width:23px;height:23px;background:#fff;"></div>
<div class="a" style="left:274px;top:507px;width:22px;height:21px;background:#fff;border:1px solid #000"></div>
<div class="a" style="left:275px;top:510px;width:19px;height:17px;line-height:17px;text-align:center;font-size:10px">+</div>
<div class="c" style="left:297px;top:507px;width:49px;height:21px;background:#fff;line-height:21px;color:#000;"><i style="left:0;right:0;text-align:center;transform-origin:50% 50%">2008</i></div>
<div class="a" style="left:346px;top:507px;width:1px;height:22px;background:#808080;"></div>
<div class="c" style="left:347px;top:507px;width:68px;height:21px;background:#fff;line-height:21px;color:#000;"><i style="left:0;right:0;text-align:center;transform-origin:50% 50%">19</i></div>
<div class="a" style="left:415px;top:507px;width:1px;height:22px;background:#808080;"></div>
<div class="c" style="left:416px;top:507px;width:106px;height:21px;background:#fff;line-height:21px;color:#000;"><i style="right:4px;transform-origin:100% 50%">152.730,02</i></div>
<div class="a" style="left:522px;top:507px;width:1px;height:22px;background:#808080;"></div>
<div class="a" style="left:297px;top:528px;width:226px;height:1px;background:#808080;"></div>
<div class="a" style="left:273px;top:528px;width:23px;height:23px;background:#fff;"></div>
<div class="a" style="left:274px;top:529px;width:22px;height:21px;background:#e6e6fa;border:1px solid #000"></div>
<div class="a" style="left:275px;top:532px;width:19px;height:17px;line-height:17px;text-align:center;font-size:10px">+</div>
<div class="c" style="left:297px;top:529px;width:49px;height:21px;background:#e6e6fa;line-height:21px;color:#000;"><i style="left:0;right:0;text-align:center;transform-origin:50% 50%">2008</i></div>
<div class="a" style="left:346px;top:529px;width:1px;height:22px;background:#808080;"></div>
<div class="c" style="left:347px;top:529px;width:68px;height:21px;background:#e6e6fa;line-height:21px;color:#000;"><i style="left:0;right:0;text-align:center;transform-origin:50% 50%">20</i></div>
<div class="a" style="left:415px;top:529px;width:1px;height:22px;background:#808080;"></div>
<div class="c" style="left:416px;top:529px;width:106px;height:21px;background:#e6e6fa;line-height:21px;color:#000;"><i style="right:4px;transform-origin:100% 50%">214.504,35</i></div>
<div class="a" style="left:522px;top:529px;width:1px;height:22px;background:#808080;"></div>
<div class="a" style="left:297px;top:550px;width:226px;height:1px;background:#808080;"></div>
<div class="a" style="left:273px;top:550px;width:23px;height:23px;background:#fff;"></div>
<div class="a" style="left:274px;top:551px;width:22px;height:21px;background:#fff;border:1px solid #000"></div>
<div class="a" style="left:275px;top:554px;width:19px;height:17px;line-height:17px;text-align:center;font-size:10px">+</div>
<div class="c" style="left:297px;top:551px;width:49px;height:21px;background:#fff;line-height:21px;color:#000;"><i style="left:0;right:0;text-align:center;transform-origin:50% 50%">2008</i></div>
<div class="a" style="left:346px;top:551px;width:1px;height:22px;background:#808080;"></div>
<div class="c" style="left:347px;top:551px;width:68px;height:21px;background:#fff;line-height:21px;color:#000;"><i style="left:0;right:0;text-align:center;transform-origin:50% 50%">21</i></div>
<div class="a" style="left:415px;top:551px;width:1px;height:22px;background:#808080;"></div>
<div class="c" style="left:416px;top:551px;width:106px;height:21px;background:#fff;line-height:21px;color:#000;"><i style="right:4px;transform-origin:100% 50%">269.587,81</i></div>
<div class="a" style="left:522px;top:551px;width:1px;height:22px;background:#808080;"></div>
<div class="a" style="left:297px;top:572px;width:226px;height:1px;background:#808080;"></div>
<div class="a" style="left:273px;top:572px;width:23px;height:23px;background:#fff;"></div>
<div class="a" style="left:274px;top:573px;width:22px;height:21px;background:#e6e6fa;border:1px solid #000"></div>
<div class="a" style="left:275px;top:576px;width:19px;height:17px;line-height:17px;text-align:center;font-size:10px">+</div>
<div class="c" style="left:297px;top:573px;width:49px;height:21px;background:#e6e6fa;line-height:21px;color:#000;"><i style="left:0;right:0;text-align:center;transform-origin:50% 50%">2008</i></div>
<div class="a" style="left:346px;top:573px;width:1px;height:22px;background:#808080;"></div>
<div class="c" style="left:347px;top:573px;width:68px;height:21px;background:#e6e6fa;line-height:21px;color:#000;"><i style="left:0;right:0;text-align:center;transform-origin:50% 50%">22</i></div>
<div class="a" style="left:415px;top:573px;width:1px;height:22px;background:#808080;"></div>
<div class="c" style="left:416px;top:573px;width:106px;height:21px;background:#e6e6fa;line-height:21px;color:#000;"><i style="right:4px;transform-origin:100% 50%">180.157,79</i></div>
<div class="a" style="left:522px;top:573px;width:1px;height:22px;background:#808080;"></div>
<div class="a" style="left:297px;top:594px;width:226px;height:1px;background:#808080;"></div>
<div class="a" style="left:273px;top:594px;width:23px;height:23px;background:#fff;"></div>
<div class="a" style="left:274px;top:595px;width:22px;height:21px;background:#fff;border:1px solid #000"></div>
<div class="a" style="left:275px;top:598px;width:19px;height:17px;line-height:17px;text-align:center;font-size:10px">+</div>
<div class="c" style="left:297px;top:595px;width:49px;height:21px;background:#fff;line-height:21px;color:#000;"><i style="left:0;right:0;text-align:center;transform-origin:50% 50%">2008</i></div>
<div class="a" style="left:346px;top:595px;width:1px;height:22px;background:#808080;"></div>
<div class="c" style="left:347px;top:595px;width:68px;height:21px;background:#fff;line-height:21px;color:#000;"><i style="left:0;right:0;text-align:center;transform-origin:50% 50%">23</i></div>
<div class="a" style="left:415px;top:595px;width:1px;height:22px;background:#808080;"></div>
<div class="c" style="left:416px;top:595px;width:106px;height:21px;background:#fff;line-height:21px;color:#000;"><i style="right:4px;transform-origin:100% 50%">140.129,06</i></div>
<div class="a" style="left:522px;top:595px;width:1px;height:22px;background:#808080;"></div>
<div class="a" style="left:297px;top:616px;width:226px;height:1px;background:#808080;"></div>
<div class="a" style="left:273px;top:616px;width:23px;height:23px;background:#fff;"></div>
<div class="a" style="left:274px;top:617px;width:22px;height:21px;background:#e6e6fa;border:1px solid #000"></div>
<div class="a" style="left:275px;top:620px;width:19px;height:17px;line-height:17px;text-align:center;font-size:10px">+</div>
<div class="c" style="left:297px;top:617px;width:49px;height:21px;background:#e6e6fa;line-height:21px;color:#000;"><i style="left:0;right:0;text-align:center;transform-origin:50% 50%">2008</i></div>
<div class="a" style="left:346px;top:617px;width:1px;height:22px;background:#808080;"></div>
<div class="c" style="left:347px;top:617px;width:68px;height:21px;background:#e6e6fa;line-height:21px;color:#000;"><i style="left:0;right:0;text-align:center;transform-origin:50% 50%">24</i></div>
<div class="a" style="left:415px;top:617px;width:1px;height:22px;background:#808080;"></div>
<div class="c" style="left:416px;top:617px;width:106px;height:21px;background:#e6e6fa;line-height:21px;color:#000;"><i style="right:4px;transform-origin:100% 50%">65.848,21</i></div>
<div class="a" style="left:522px;top:617px;width:1px;height:22px;background:#808080;"></div>
<div class="a" style="left:297px;top:638px;width:226px;height:1px;background:#808080;"></div>
<div class="a" style="left:296px;top:419px;width:1px;height:22px;background:#808080;"></div>
<div class="lb" style="left:272px;top:765px;width:253px;height:16px"><span style="left:2px;top:1px;letter-spacing:0.22px">Aktarılacak Tarih</span></div>
<div class="sunk" style="left:272px;top:781px;width:253px;height:19px"></div>
<div class="t g" style="left:276px;top:783.5px;">27</div>
<div class="t g" style="left:299.5px;top:783.5px;">Mart</div>
<div class="t g" style="left:334px;top:783.5px;">2008 Perşembe</div>
<div class="sb" style="left:507px;top:783px;width:16px;height:15px"></div>
<div class="tri" style="left:511px;top:788px;border-left:3.5px solid transparent;border-right:3.5px solid transparent;border-top:4px solid #000"></div>
<div class="a" style="left:536px;top:398px;width:640px;height:402px;background:#808080;border:1px solid #000"></div>
<div class="a" style="left:537px;top:399px;width:622px;height:17px;background:#fff;"></div>
<div class="c" style="left:539px;top:401px;width:63px;height:15px;background:#e6e6fa;line-height:15px;color:#000;"><i style="left:6px;transform-origin:0 50%">TARIH</i></div>
<div class="a" style="left:602px;top:402px;width:1px;height:13px;background:#808080;"></div>
<div class="c" style="left:604px;top:401px;width:98px;height:15px;background:#e6e6fa;line-height:15px;color:#000;"><i style="left:5px;transform-origin:0 50%">VADE TARIHI</i></div>
<div class="a" style="left:702px;top:402px;width:1px;height:13px;background:#808080;"></div>
<div class="c" style="left:704px;top:401px;width:96px;height:15px;background:#e6e6fa;line-height:15px;color:#000;"><i style="left:5px;transform-origin:0 50%">BELGE NO</i></div>
<div class="a" style="left:800px;top:402px;width:1px;height:13px;background:#808080;"></div>
<div class="c" style="left:802px;top:401px;width:135px;height:15px;background:#e6e6fa;line-height:15px;color:#000;"><i style="left:5px;transform-origin:0 50%">AÇIKLAMA</i></div>
<div class="a" style="left:937px;top:402px;width:1px;height:13px;background:#808080;"></div>
<div class="c" style="left:939px;top:401px;width:60px;height:15px;background:#e6e6fa;line-height:15px;color:#000;"><i style="left:5px;transform-origin:0 50%">BORÇ</i></div>
<div class="a" style="left:999px;top:402px;width:1px;height:13px;background:#808080;"></div>
<div class="c" style="left:1001px;top:401px;width:87px;height:15px;background:#e6e6fa;line-height:15px;color:#000;"><i style="left:5px;transform-origin:0 50%">ALACAK</i></div>
<div class="a" style="left:1088px;top:402px;width:1px;height:13px;background:#808080;"></div>
<div class="c" style="left:1090px;top:401px;width:69px;height:15px;background:#e6e6fa;line-height:15px;color:#000;"><i style="left:5px;transform-origin:0 50%">BAKİYE</i></div>
<div class="a" style="left:537px;top:416px;width:622px;height:1px;background:#808080;"></div>
<div class="a" style="left:537px;top:417px;width:622px;height:366px;overflow:hidden">
<div class="c" style="left:0px;top:0px;width:65px;height:17px;background:#c1ffc1;line-height:17px;color:#000;"><i style="left:4px;transform-origin:0 50%">25.02.2008</i></div>
<div class="a" style="left:65px;top:0px;width:1px;height:18px;background:#808080;"></div>
<div class="c" style="left:66px;top:0px;width:99px;height:17px;background:#c1ffc1;line-height:17px;color:#000;"><i style="left:0;right:0;text-align:center;transform-origin:50% 50%">10.05.2008</i></div>
<div class="a" style="left:165px;top:0px;width:1px;height:18px;background:#808080;"></div>
<div class="c" style="left:166px;top:0px;width:97px;height:17px;background:#c1ffc1;line-height:17px;color:#000;"><i style="left:4px;transform-origin:0 50%">000000000431638</i></div>
<div class="a" style="left:263px;top:0px;width:1px;height:18px;background:#808080;"></div>
<div class="c" style="left:264px;top:0px;width:136px;height:17px;background:#c1ffc1;line-height:17px;color:#000;letter-spacing:.14px;"><i style="left:3px;transform-origin:0 50%">FT.MIZ 00000000A713890</i></div>
<div class="a" style="left:400px;top:0px;width:1px;height:18px;background:#808080;"></div>
<div class="c" style="left:401px;top:0px;width:61px;height:17px;background:#c1ffc1;line-height:17px;color:#000;"><i style="right:4px;transform-origin:100% 50%">26.587,57</i></div>
<div class="a" style="left:462px;top:0px;width:1px;height:18px;background:#808080;"></div>
<div class="c" style="left:463px;top:0px;width:88px;height:17px;background:#c1ffc1;line-height:17px;color:#000;"><i style="right:4px;transform-origin:100% 50%">0,00000000</i></div>
<div class="a" style="left:551px;top:0px;width:1px;height:18px;background:#808080;"></div>
<div class="c" style="left:552px;top:0px;width:70px;height:17px;background:#c1ffc1;line-height:17px;color:#000;"><i style="right:4px;transform-origin:100% 50%">565.570,42</i></div>
<div class="a" style="left:0px;top:17px;width:622px;height:1px;background:#808080;"></div>
<div class="c" style="left:0px;top:18px;width:65px;height:17px;background:#fff;line-height:17px;color:#000;"><i style="left:4px;transform-origin:0 50%">25.02.2008</i></div>
<div class="a" style="left:65px;top:18px;width:1px;height:18px;background:#808080;"></div>
<div class="c" style="left:66px;top:18px;width:99px;height:17px;background:#fff;line-height:17px;color:#000;"><i style="left:0;right:0;text-align:center;transform-origin:50% 50%">10.05.2008</i></div>
<div class="a" style="left:165px;top:18px;width:1px;height:18px;background:#808080;"></div>
<div class="c" style="left:166px;top:18px;width:97px;height:17px;background:#fff;line-height:17px;color:#000;"><i style="left:4px;transform-origin:0 50%">000000000431644</i></div>
<div class="a" style="left:263px;top:18px;width:1px;height:18px;background:#808080;"></div>
<div class="c" style="left:264px;top:18px;width:136px;height:17px;background:#fff;line-height:17px;color:#000;letter-spacing:.14px;"><i style="left:3px;transform-origin:0 50%">FT.MIZ 00000000A713902</i></div>
<div class="a" style="left:400px;top:18px;width:1px;height:18px;background:#808080;"></div>
<div class="c" style="left:401px;top:18px;width:61px;height:17px;background:#fff;line-height:17px;color:#000;"><i style="right:4px;transform-origin:100% 50%">866,70</i></div>
<div class="a" style="left:462px;top:18px;width:1px;height:18px;background:#808080;"></div>
<div class="c" style="left:463px;top:18px;width:88px;height:17px;background:#fff;line-height:17px;color:#000;"><i style="right:4px;transform-origin:100% 50%">0,00000000</i></div>
<div class="a" style="left:551px;top:18px;width:1px;height:18px;background:#808080;"></div>
<div class="c" style="left:552px;top:18px;width:70px;height:17px;background:#fff;line-height:17px;color:#000;"><i style="right:4px;transform-origin:100% 50%">566.437,12</i></div>
<div class="a" style="left:0px;top:35px;width:622px;height:1px;background:#808080;"></div>
<div class="c" style="left:0px;top:36px;width:65px;height:17px;background:#c1ffc1;line-height:17px;color:#000;"><i style="left:4px;transform-origin:0 50%">25.02.2008</i></div>
<div class="a" style="left:65px;top:36px;width:1px;height:18px;background:#808080;"></div>
<div class="c" style="left:66px;top:36px;width:99px;height:17px;background:#c1ffc1;line-height:17px;color:#000;"><i style="left:0;right:0;text-align:center;transform-origin:50% 50%">11.05.2008</i></div>
<div class="a" style="left:165px;top:36px;width:1px;height:18px;background:#808080;"></div>
<div class="c" style="left:166px;top:36px;width:97px;height:17px;background:#c1ffc1;line-height:17px;color:#000;"><i style="left:4px;transform-origin:0 50%">000000000431639</i></div>
<div class="a" style="left:263px;top:36px;width:1px;height:18px;background:#808080;"></div>
<div class="c" style="left:264px;top:36px;width:136px;height:17px;background:#c1ffc1;line-height:17px;color:#000;letter-spacing:.14px;"><i style="left:3px;transform-origin:0 50%">FT.MIZ 00000000A713891</i></div>
<div class="a" style="left:400px;top:36px;width:1px;height:18px;background:#808080;"></div>
<div class="c" style="left:401px;top:36px;width:61px;height:17px;background:#c1ffc1;line-height:17px;color:#000;"><i style="right:4px;transform-origin:100% 50%">1.019,90</i></div>
<div class="a" style="left:462px;top:36px;width:1px;height:18px;background:#808080;"></div>
<div class="c" style="left:463px;top:36px;width:88px;height:17px;background:#c1ffc1;line-height:17px;color:#000;"><i style="right:4px;transform-origin:100% 50%">0,00000000</i></div>
<div class="a" style="left:551px;top:36px;width:1px;height:18px;background:#808080;"></div>
<div class="c" style="left:552px;top:36px;width:70px;height:17px;background:#c1ffc1;line-height:17px;color:#000;"><i style="right:4px;transform-origin:100% 50%">567.457,03</i></div>
<div class="a" style="left:0px;top:53px;width:622px;height:1px;background:#808080;"></div>
<div class="c" style="left:0px;top:54px;width:65px;height:17px;background:#fff;line-height:17px;color:#000;"><i style="left:4px;transform-origin:0 50%">26.02.2008</i></div>
<div class="a" style="left:65px;top:54px;width:1px;height:18px;background:#808080;"></div>
<div class="c" style="left:66px;top:54px;width:99px;height:17px;background:#fff;line-height:17px;color:#000;"><i style="left:0;right:0;text-align:center;transform-origin:50% 50%">11.05.2008</i></div>
<div class="a" style="left:165px;top:54px;width:1px;height:18px;background:#808080;"></div>
<div class="c" style="left:166px;top:54px;width:97px;height:17px;background:#fff;line-height:17px;color:#000;"><i style="left:4px;transform-origin:0 50%">000000000431656</i></div>
<div class="a" style="left:263px;top:54px;width:1px;height:18px;background:#808080;"></div>
<div class="c" style="left:264px;top:54px;width:136px;height:17px;background:#fff;line-height:17px;color:#000;letter-spacing:.14px;"><i style="left:3px;transform-origin:0 50%">FATURAMIZ</i></div>
<div class="a" style="left:400px;top:54px;width:1px;height:18px;background:#808080;"></div>
<div class="c" style="left:401px;top:54px;width:61px;height:17px;background:#fff;line-height:17px;color:#000;"><i style="right:4px;transform-origin:100% 50%">21.263,47</i></div>
<div class="a" style="left:462px;top:54px;width:1px;height:18px;background:#808080;"></div>
<div class="c" style="left:463px;top:54px;width:88px;height:17px;background:#fff;line-height:17px;color:#000;"><i style="right:4px;transform-origin:100% 50%">0,00000000</i></div>
<div class="a" style="left:551px;top:54px;width:1px;height:18px;background:#808080;"></div>
<div class="c" style="left:552px;top:54px;width:70px;height:17px;background:#fff;line-height:17px;color:#000;"><i style="right:4px;transform-origin:100% 50%">588.720,50</i></div>
<div class="a" style="left:0px;top:71px;width:622px;height:1px;background:#808080;"></div>
<div class="c" style="left:0px;top:72px;width:65px;height:17px;background:#c1ffc1;line-height:17px;color:#000;"><i style="left:4px;transform-origin:0 50%">27.02.2008</i></div>
<div class="a" style="left:65px;top:72px;width:1px;height:18px;background:#808080;"></div>
<div class="c" style="left:66px;top:72px;width:99px;height:17px;background:#c1ffc1;line-height:17px;color:#000;"><i style="left:0;right:0;text-align:center;transform-origin:50% 50%">12.05.2008</i></div>
<div class="a" style="left:165px;top:72px;width:1px;height:18px;background:#808080;"></div>
<div class="c" style="left:166px;top:72px;width:97px;height:17px;background:#c1ffc1;line-height:17px;color:#000;"><i style="left:4px;transform-origin:0 50%">000000000431670</i></div>
<div class="a" style="left:263px;top:72px;width:1px;height:18px;background:#808080;"></div>
<div class="c" style="left:264px;top:72px;width:136px;height:17px;background:#c1ffc1;line-height:17px;color:#000;letter-spacing:.14px;"><i style="left:3px;transform-origin:0 50%">FT.MIZ 00000000A713923</i></div>
<div class="a" style="left:400px;top:72px;width:1px;height:18px;background:#808080;"></div>
<div class="c" style="left:401px;top:72px;width:61px;height:17px;background:#c1ffc1;line-height:17px;color:#000;"><i style="right:4px;transform-origin:100% 50%">8.541,38</i></div>
<div class="a" style="left:462px;top:72px;width:1px;height:18px;background:#808080;"></div>
<div class="c" style="left:463px;top:72px;width:88px;height:17px;background:#c1ffc1;line-height:17px;color:#000;"><i style="right:4px;transform-origin:100% 50%">0,00000000</i></div>
<div class="a" style="left:551px;top:72px;width:1px;height:18px;background:#808080;"></div>
<div class="c" style="left:552px;top:72px;width:70px;height:17px;background:#c1ffc1;line-height:17px;color:#000;"><i style="right:4px;transform-origin:100% 50%">597.261,88</i></div>
<div class="a" style="left:0px;top:89px;width:622px;height:1px;background:#808080;"></div>
<div class="c" style="left:0px;top:90px;width:65px;height:17px;background:#fff;line-height:17px;color:#000;"><i style="left:4px;transform-origin:0 50%">27.02.2008</i></div>
<div class="a" style="left:65px;top:90px;width:1px;height:18px;background:#808080;"></div>
<div class="c" style="left:66px;top:90px;width:99px;height:17px;background:#fff;line-height:17px;color:#000;"><i style="left:0;right:0;text-align:center;transform-origin:50% 50%">12.05.2008</i></div>
<div class="a" style="left:165px;top:90px;width:1px;height:18px;background:#808080;"></div>
<div class="c" style="left:166px;top:90px;width:97px;height:17px;background:#fff;line-height:17px;color:#000;"><i style="left:4px;transform-origin:0 50%">000000000431671</i></div>
<div class="a" style="left:263px;top:90px;width:1px;height:18px;background:#808080;"></div>
<div class="c" style="left:264px;top:90px;width:136px;height:17px;background:#fff;line-height:17px;color:#000;letter-spacing:.14px;"><i style="left:3px;transform-origin:0 50%">FT.MIZ 00000000A713925</i></div>
<div class="a" style="left:400px;top:90px;width:1px;height:18px;background:#808080;"></div>
<div class="c" style="left:401px;top:90px;width:61px;height:17px;background:#fff;line-height:17px;color:#000;"><i style="right:4px;transform-origin:100% 50%">28.039,98</i></div>
<div class="a" style="left:462px;top:90px;width:1px;height:18px;background:#808080;"></div>
<div class="c" style="left:463px;top:90px;width:88px;height:17px;background:#fff;line-height:17px;color:#000;"><i style="right:4px;transform-origin:100% 50%">0,00000000</i></div>
<div class="a" style="left:551px;top:90px;width:1px;height:18px;background:#808080;"></div>
<div class="c" style="left:552px;top:90px;width:70px;height:17px;background:#fff;line-height:17px;color:#000;"><i style="right:4px;transform-origin:100% 50%">625.301,86</i></div>
<div class="a" style="left:0px;top:107px;width:622px;height:1px;background:#808080;"></div>
<div class="c" style="left:0px;top:108px;width:65px;height:17px;background:#c1ffc1;line-height:17px;color:#000;"><i style="left:4px;transform-origin:0 50%">27.02.2008</i></div>
<div class="a" style="left:65px;top:108px;width:1px;height:18px;background:#808080;"></div>
<div class="c" style="left:66px;top:108px;width:99px;height:17px;background:#c1ffc1;line-height:17px;color:#000;"><i style="left:0;right:0;text-align:center;transform-origin:50% 50%">12.05.2008</i></div>
<div class="a" style="left:165px;top:108px;width:1px;height:18px;background:#808080;"></div>
<div class="c" style="left:166px;top:108px;width:97px;height:17px;background:#c1ffc1;line-height:17px;color:#000;"><i style="left:4px;transform-origin:0 50%">000000000431672</i></div>
<div class="a" style="left:263px;top:108px;width:1px;height:18px;background:#808080;"></div>
<div class="c" style="left:264px;top:108px;width:136px;height:17px;background:#c1ffc1;line-height:17px;color:#000;letter-spacing:.14px;"><i style="left:3px;transform-origin:0 50%">FT.MIZ 00000000A713930</i></div>
<div class="a" style="left:400px;top:108px;width:1px;height:18px;background:#808080;"></div>
<div class="c" style="left:401px;top:108px;width:61px;height:17px;background:#c1ffc1;line-height:17px;color:#000;"><i style="right:4px;transform-origin:100% 50%">30.011,83</i></div>
<div class="a" style="left:462px;top:108px;width:1px;height:18px;background:#808080;"></div>
<div class="c" style="left:463px;top:108px;width:88px;height:17px;background:#c1ffc1;line-height:17px;color:#000;"><i style="right:4px;transform-origin:100% 50%">0,00000000</i></div>
<div class="a" style="left:551px;top:108px;width:1px;height:18px;background:#808080;"></div>
<div class="c" style="left:552px;top:108px;width:70px;height:17px;background:#c1ffc1;line-height:17px;color:#000;"><i style="right:4px;transform-origin:100% 50%">655.313,69</i></div>
<div class="a" style="left:0px;top:125px;width:622px;height:1px;background:#808080;"></div>
<div class="c" style="left:0px;top:126px;width:65px;height:17px;background:#fff;line-height:17px;color:#000;"><i style="left:4px;transform-origin:0 50%">13.02.2008</i></div>
<div class="a" style="left:65px;top:126px;width:1px;height:18px;background:#808080;"></div>
<div class="c" style="left:66px;top:126px;width:99px;height:17px;background:#fff;line-height:17px;color:#000;"><i style="left:0;right:0;text-align:center;transform-origin:50% 50%">13.05.2008</i></div>
<div class="a" style="left:165px;top:126px;width:1px;height:18px;background:#808080;"></div>
<div class="c" style="left:166px;top:126px;width:97px;height:17px;background:#fff;line-height:17px;color:#000;"><i style="left:4px;transform-origin:0 50%">000000000431553</i></div>
<div class="a" style="left:263px;top:126px;width:1px;height:18px;background:#808080;"></div>
<div class="c" style="left:264px;top:126px;width:136px;height:17px;background:#fff;line-height:17px;color:#000;letter-spacing:.14px;"><i style="left:3px;transform-origin:0 50%">FT.MIZ 00000000A713769</i></div>
<div class="a" style="left:400px;top:126px;width:1px;height:18px;background:#808080;"></div>
<div class="c" style="left:401px;top:126px;width:61px;height:17px;background:#fff;line-height:17px;color:#000;"><i style="right:4px;transform-origin:100% 50%">29.474,37</i></div>
<div class="a" style="left:462px;top:126px;width:1px;height:18px;background:#808080;"></div>
<div class="c" style="left:463px;top:126px;width:88px;height:17px;background:#fff;line-height:17px;color:#000;"><i style="right:4px;transform-origin:100% 50%">0,00000000</i></div>
<div class="a" style="left:551px;top:126px;width:1px;height:18px;background:#808080;"></div>
<div class="c" style="left:552px;top:126px;width:70px;height:17px;background:#fff;line-height:17px;color:#000;"><i style="right:4px;transform-origin:100% 50%">684.788,06</i></div>
<div class="a" style="left:0px;top:143px;width:622px;height:1px;background:#808080;"></div>
<div class="c" style="left:0px;top:144px;width:65px;height:17px;background:#c1ffc1;line-height:17px;color:#000;"><i style="left:4px;transform-origin:0 50%">14.03.2008</i></div>
<div class="a" style="left:65px;top:144px;width:1px;height:18px;background:#808080;"></div>
<div class="c" style="left:66px;top:144px;width:99px;height:17px;background:#c1ffc1;line-height:17px;color:#000;"><i style="left:0;right:0;text-align:center;transform-origin:50% 50%">13.05.2008</i></div>
<div class="a" style="left:165px;top:144px;width:1px;height:18px;background:#808080;"></div>
<div class="c" style="left:166px;top:144px;width:97px;height:17px;background:#c1ffc1;line-height:17px;color:#000;"><i style="left:4px;transform-origin:0 50%">000000000248063</i></div>
<div class="a" style="left:263px;top:144px;width:1px;height:18px;background:#808080;"></div>
<div class="c" style="left:264px;top:144px;width:136px;height:17px;background:#c1ffc1;line-height:17px;color:#000;letter-spacing:.14px;"><i style="left:3px;transform-origin:0 50%">FT.MIZ 00000000A714095</i></div>
<div class="a" style="left:400px;top:144px;width:1px;height:18px;background:#808080;"></div>
<div class="c" style="left:401px;top:144px;width:61px;height:17px;background:#c1ffc1;line-height:17px;color:#000;"><i style="right:4px;transform-origin:100% 50%">31.998,61</i></div>
<div class="a" style="left:462px;top:144px;width:1px;height:18px;background:#808080;"></div>
<div class="c" style="left:463px;top:144px;width:88px;height:17px;background:#c1ffc1;line-height:17px;color:#000;"><i style="right:4px;transform-origin:100% 50%">0,00000000</i></div>
<div class="a" style="left:551px;top:144px;width:1px;height:18px;background:#808080;"></div>
<div class="c" style="left:552px;top:144px;width:70px;height:17px;background:#c1ffc1;line-height:17px;color:#000;"><i style="right:4px;transform-origin:100% 50%">716.786,67</i></div>
<div class="a" style="left:0px;top:161px;width:622px;height:1px;background:#808080;"></div>
<div class="c" style="left:0px;top:162px;width:65px;height:17px;background:#fff;line-height:17px;color:#000;"><i style="left:4px;transform-origin:0 50%">29.02.2008</i></div>
<div class="a" style="left:65px;top:162px;width:1px;height:18px;background:#808080;"></div>
<div class="c" style="left:66px;top:162px;width:99px;height:17px;background:#fff;line-height:17px;color:#000;"><i style="left:0;right:0;text-align:center;transform-origin:50% 50%">14.05.2008</i></div>
<div class="a" style="left:165px;top:162px;width:1px;height:18px;background:#808080;"></div>
<div class="c" style="left:166px;top:162px;width:97px;height:17px;background:#fff;line-height:17px;color:#000;"><i style="left:4px;transform-origin:0 50%">000000000431679</i></div>
<div class="a" style="left:263px;top:162px;width:1px;height:18px;background:#808080;"></div>
<div class="c" style="left:264px;top:162px;width:136px;height:17px;background:#fff;line-height:17px;color:#000;letter-spacing:.14px;"><i style="left:3px;transform-origin:0 50%">FT.MIZ 00000000A713940</i></div>
<div class="a" style="left:400px;top:162px;width:1px;height:18px;background:#808080;"></div>
<div class="c" style="left:401px;top:162px;width:61px;height:17px;background:#fff;line-height:17px;color:#000;"><i style="right:4px;transform-origin:100% 50%">29.258,60</i></div>
<div class="a" style="left:462px;top:162px;width:1px;height:18px;background:#808080;"></div>
<div class="c" style="left:463px;top:162px;width:88px;height:17px;background:#fff;line-height:17px;color:#000;"><i style="right:4px;transform-origin:100% 50%">0,00000000</i></div>
<div class="a" style="left:551px;top:162px;width:1px;height:18px;background:#808080;"></div>
<div class="c" style="left:552px;top:162px;width:70px;height:17px;background:#fff;line-height:17px;color:#000;"><i style="right:4px;transform-origin:100% 50%">746.045,27</i></div>
<div class="a" style="left:0px;top:179px;width:622px;height:1px;background:#808080;"></div>
<div class="c" style="left:0px;top:180px;width:65px;height:17px;background:#c1ffc1;line-height:17px;color:#000;"><i style="left:4px;transform-origin:0 50%">01.03.2008</i></div>
<div class="a" style="left:65px;top:180px;width:1px;height:18px;background:#808080;"></div>
<div class="c" style="left:66px;top:180px;width:99px;height:17px;background:#c1ffc1;line-height:17px;color:#000;"><i style="left:0;right:0;text-align:center;transform-origin:50% 50%">15.05.2008</i></div>
<div class="a" style="left:165px;top:180px;width:1px;height:18px;background:#808080;"></div>
<div class="c" style="left:166px;top:180px;width:97px;height:17px;background:#c1ffc1;line-height:17px;color:#000;"><i style="left:4px;transform-origin:0 50%">000000000431688</i></div>
<div class="a" style="left:263px;top:180px;width:1px;height:18px;background:#808080;"></div>
<div class="c" style="left:264px;top:180px;width:136px;height:17px;background:#c1ffc1;line-height:17px;color:#000;letter-spacing:.14px;"><i style="left:3px;transform-origin:0 50%">FATURAMIZ</i></div>
<div class="a" style="left:400px;top:180px;width:1px;height:18px;background:#808080;"></div>
<div class="c" style="left:401px;top:180px;width:61px;height:17px;background:#c1ffc1;line-height:17px;color:#000;"><i style="right:4px;transform-origin:100% 50%">7.441,93</i></div>
<div class="a" style="left:462px;top:180px;width:1px;height:18px;background:#808080;"></div>
<div class="c" style="left:463px;top:180px;width:88px;height:17px;background:#c1ffc1;line-height:17px;color:#000;"><i style="right:4px;transform-origin:100% 50%">0,00000000</i></div>
<div class="a" style="left:551px;top:180px;width:1px;height:18px;background:#808080;"></div>
<div class="c" style="left:552px;top:180px;width:70px;height:17px;background:#c1ffc1;line-height:17px;color:#000;"><i style="right:4px;transform-origin:100% 50%">753.487,20</i></div>
<div class="a" style="left:0px;top:197px;width:622px;height:1px;background:#808080;"></div>
<div class="c" style="left:0px;top:198px;width:65px;height:17px;background:#fff;line-height:17px;color:#000;"><i style="left:4px;transform-origin:0 50%">03.03.2008</i></div>
<div class="a" style="left:65px;top:198px;width:1px;height:18px;background:#808080;"></div>
<div class="c" style="left:66px;top:198px;width:99px;height:17px;background:#fff;line-height:17px;color:#000;"><i style="left:0;right:0;text-align:center;transform-origin:50% 50%">17.05.2008</i></div>
<div class="a" style="left:165px;top:198px;width:1px;height:18px;background:#808080;"></div>
<div class="c" style="left:166px;top:198px;width:97px;height:17px;background:#fff;line-height:17px;color:#000;"><i style="left:4px;transform-origin:0 50%">000000000431709</i></div>
<div class="a" style="left:263px;top:198px;width:1px;height:18px;background:#808080;"></div>
<div class="c" style="left:264px;top:198px;width:136px;height:17px;background:#fff;line-height:17px;color:#000;letter-spacing:.14px;"><i style="left:3px;transform-origin:0 50%">FATURAMIZ</i></div>
<div class="a" style="left:400px;top:198px;width:1px;height:18px;background:#808080;"></div>
<div class="c" style="left:401px;top:198px;width:61px;height:17px;background:#fff;line-height:17px;color:#000;"><i style="right:4px;transform-origin:100% 50%">24.958,84</i></div>
<div class="a" style="left:462px;top:198px;width:1px;height:18px;background:#808080;"></div>
<div class="c" style="left:463px;top:198px;width:88px;height:17px;background:#fff;line-height:17px;color:#000;"><i style="right:4px;transform-origin:100% 50%">0,00000000</i></div>
<div class="a" style="left:551px;top:198px;width:1px;height:18px;background:#808080;"></div>
<div class="c" style="left:552px;top:198px;width:70px;height:17px;background:#fff;line-height:17px;color:#000;"><i style="right:4px;transform-origin:100% 50%">778.446,04</i></div>
<div class="a" style="left:0px;top:215px;width:622px;height:1px;background:#808080;"></div>
<div class="c" style="left:0px;top:216px;width:65px;height:17px;background:#c1ffc1;line-height:17px;color:#000;"><i style="left:4px;transform-origin:0 50%">03.03.2008</i></div>
<div class="a" style="left:65px;top:216px;width:1px;height:18px;background:#808080;"></div>
<div class="c" style="left:66px;top:216px;width:99px;height:17px;background:#c1ffc1;line-height:17px;color:#000;"><i style="left:0;right:0;text-align:center;transform-origin:50% 50%">17.05.2008</i></div>
<div class="a" style="left:165px;top:216px;width:1px;height:18px;background:#808080;"></div>
<div class="c" style="left:166px;top:216px;width:97px;height:17px;background:#c1ffc1;line-height:17px;color:#000;"><i style="left:4px;transform-origin:0 50%">000000000431710</i></div>
<div class="a" style="left:263px;top:216px;width:1px;height:18px;background:#808080;"></div>
<div class="c" style="left:264px;top:216px;width:136px;height:17px;background:#c1ffc1;line-height:17px;color:#000;letter-spacing:.14px;"><i style="left:3px;transform-origin:0 50%">FT.MIZ 00000000A713969</i></div>
<div class="a" style="left:400px;top:216px;width:1px;height:18px;background:#808080;"></div>
<div class="c" style="left:401px;top:216px;width:61px;height:17px;background:#c1ffc1;line-height:17px;color:#000;"><i style="right:4px;transform-origin:100% 50%">31.388,58</i></div>
<div class="a" style="left:462px;top:216px;width:1px;height:18px;background:#808080;"></div>
<div class="c" style="left:463px;top:216px;width:88px;height:17px;background:#c1ffc1;line-height:17px;color:#000;"><i style="right:4px;transform-origin:100% 50%">0,00000000</i></div>
<div class="a" style="left:551px;top:216px;width:1px;height:18px;background:#808080;"></div>
<div class="c" style="left:552px;top:216px;width:70px;height:17px;background:#c1ffc1;line-height:17px;color:#000;"><i style="right:4px;transform-origin:100% 50%">809.834,62</i></div>
<div class="a" style="left:0px;top:233px;width:622px;height:1px;background:#808080;"></div>
<div class="c" style="left:0px;top:234px;width:65px;height:17px;background:#fff;line-height:17px;color:#000;"><i style="left:4px;transform-origin:0 50%">03.03.2008</i></div>
<div class="a" style="left:65px;top:234px;width:1px;height:18px;background:#808080;"></div>
<div class="c" style="left:66px;top:234px;width:99px;height:17px;background:#fff;line-height:17px;color:#000;"><i style="left:0;right:0;text-align:center;transform-origin:50% 50%">17.05.2008</i></div>
<div class="a" style="left:165px;top:234px;width:1px;height:18px;background:#808080;"></div>
<div class="c" style="left:166px;top:234px;width:97px;height:17px;background:#fff;line-height:17px;color:#000;"><i style="left:4px;transform-origin:0 50%">000000000431711</i></div>
<div class="a" style="left:263px;top:234px;width:1px;height:18px;background:#808080;"></div>
<div class="c" style="left:264px;top:234px;width:136px;height:17px;background:#fff;line-height:17px;color:#000;letter-spacing:.14px;"><i style="left:3px;transform-origin:0 50%">FT.MIZ 00000000A713971</i></div>
<div class="a" style="left:400px;top:234px;width:1px;height:18px;background:#808080;"></div>
<div class="c" style="left:401px;top:234px;width:61px;height:17px;background:#fff;line-height:17px;color:#000;"><i style="right:4px;transform-origin:100% 50%">10.782,80</i></div>
<div class="a" style="left:462px;top:234px;width:1px;height:18px;background:#808080;"></div>
<div class="c" style="left:463px;top:234px;width:88px;height:17px;background:#fff;line-height:17px;color:#000;"><i style="right:4px;transform-origin:100% 50%">0,00000000</i></div>
<div class="a" style="left:551px;top:234px;width:1px;height:18px;background:#808080;"></div>
<div class="c" style="left:552px;top:234px;width:70px;height:17px;background:#fff;line-height:17px;color:#000;"><i style="right:4px;transform-origin:100% 50%">820.617,43</i></div>
<div class="a" style="left:0px;top:251px;width:622px;height:1px;background:#808080;"></div>
<div class="c" style="left:0px;top:252px;width:65px;height:17px;background:#c1ffc1;line-height:17px;color:#000;"><i style="left:4px;transform-origin:0 50%">04.03.2008</i></div>
<div class="a" style="left:65px;top:252px;width:1px;height:18px;background:#808080;"></div>
<div class="c" style="left:66px;top:252px;width:99px;height:17px;background:#c1ffc1;line-height:17px;color:#000;"><i style="left:0;right:0;text-align:center;transform-origin:50% 50%">18.05.2008</i></div>
<div class="a" style="left:165px;top:252px;width:1px;height:18px;background:#808080;"></div>
<div class="c" style="left:166px;top:252px;width:97px;height:17px;background:#c1ffc1;line-height:17px;color:#000;"><i style="left:4px;transform-origin:0 50%">000000000431718</i></div>
<div class="a" style="left:263px;top:252px;width:1px;height:18px;background:#808080;"></div>
<div class="c" style="left:264px;top:252px;width:136px;height:17px;background:#c1ffc1;line-height:17px;color:#000;letter-spacing:.14px;"><i style="left:3px;transform-origin:0 50%">FT.MIZ 00000000A713979</i></div>
<div class="a" style="left:400px;top:252px;width:1px;height:18px;background:#808080;"></div>
<div class="c" style="left:401px;top:252px;width:61px;height:17px;background:#c1ffc1;line-height:17px;color:#000;"><i style="right:4px;transform-origin:100% 50%">30.779,87</i></div>
<div class="a" style="left:462px;top:252px;width:1px;height:18px;background:#808080;"></div>
<div class="c" style="left:463px;top:252px;width:88px;height:17px;background:#c1ffc1;line-height:17px;color:#000;"><i style="right:4px;transform-origin:100% 50%">0,00000000</i></div>
<div class="a" style="left:551px;top:252px;width:1px;height:18px;background:#808080;"></div>
<div class="c" style="left:552px;top:252px;width:70px;height:17px;background:#c1ffc1;line-height:17px;color:#000;"><i style="right:4px;transform-origin:100% 50%">851.397,30</i></div>
<div class="a" style="left:0px;top:269px;width:622px;height:1px;background:#808080;"></div>
<div class="c" style="left:0px;top:270px;width:65px;height:17px;background:#fff;line-height:17px;color:#000;"><i style="left:4px;transform-origin:0 50%">04.03.2008</i></div>
<div class="a" style="left:65px;top:270px;width:1px;height:18px;background:#808080;"></div>
<div class="c" style="left:66px;top:270px;width:99px;height:17px;background:#fff;line-height:17px;color:#000;"><i style="left:0;right:0;text-align:center;transform-origin:50% 50%">18.05.2008</i></div>
<div class="a" style="left:165px;top:270px;width:1px;height:18px;background:#808080;"></div>
<div class="c" style="left:166px;top:270px;width:97px;height:17px;background:#fff;line-height:17px;color:#000;"><i style="left:4px;transform-origin:0 50%">000000000431719</i></div>
<div class="a" style="left:263px;top:270px;width:1px;height:18px;background:#808080;"></div>
<div class="c" style="left:264px;top:270px;width:136px;height:17px;background:#fff;line-height:17px;color:#000;letter-spacing:.14px;"><i style="left:3px;transform-origin:0 50%">FT.MIZ 00000000A713985</i></div>
<div class="a" style="left:400px;top:270px;width:1px;height:18px;background:#808080;"></div>
<div class="c" style="left:401px;top:270px;width:61px;height:17px;background:#fff;line-height:17px;color:#000;"><i style="right:4px;transform-origin:100% 50%">32.795,82</i></div>
<div class="a" style="left:462px;top:270px;width:1px;height:18px;background:#808080;"></div>
<div class="c" style="left:463px;top:270px;width:88px;height:17px;background:#fff;line-height:17px;color:#000;"><i style="right:4px;transform-origin:100% 50%">0,00000000</i></div>
<div class="a" style="left:551px;top:270px;width:1px;height:18px;background:#808080;"></div>
<div class="c" style="left:552px;top:270px;width:70px;height:17px;background:#fff;line-height:17px;color:#000;"><i style="right:4px;transform-origin:100% 50%">884.193,12</i></div>
<div class="a" style="left:0px;top:287px;width:622px;height:1px;background:#808080;"></div>
<div class="c" style="left:0px;top:288px;width:65px;height:17px;background:#c1ffc1;line-height:17px;color:#000;"><i style="left:4px;transform-origin:0 50%">04.03.2008</i></div>
<div class="a" style="left:65px;top:288px;width:1px;height:18px;background:#808080;"></div>
<div class="c" style="left:66px;top:288px;width:99px;height:17px;background:#c1ffc1;line-height:17px;color:#000;"><i style="left:0;right:0;text-align:center;transform-origin:50% 50%">18.05.2008</i></div>
<div class="a" style="left:165px;top:288px;width:1px;height:18px;background:#808080;"></div>
<div class="c" style="left:166px;top:288px;width:97px;height:17px;background:#c1ffc1;line-height:17px;color:#000;"><i style="left:4px;transform-origin:0 50%">000000000431720</i></div>
<div class="a" style="left:263px;top:288px;width:1px;height:18px;background:#808080;"></div>
<div class="c" style="left:264px;top:288px;width:136px;height:17px;background:#c1ffc1;line-height:17px;color:#000;letter-spacing:.14px;"><i style="left:3px;transform-origin:0 50%">FT.MIZ 00000000A713986</i></div>
<div class="a" style="left:400px;top:288px;width:1px;height:18px;background:#808080;"></div>
<div class="c" style="left:401px;top:288px;width:61px;height:17px;background:#c1ffc1;line-height:17px;color:#000;"><i style="right:4px;transform-origin:100% 50%">28.252,85</i></div>
<div class="a" style="left:462px;top:288px;width:1px;height:18px;background:#808080;"></div>
<div class="c" style="left:463px;top:288px;width:88px;height:17px;background:#c1ffc1;line-height:17px;color:#000;"><i style="right:4px;transform-origin:100% 50%">0,00000000</i></div>
<div class="a" style="left:551px;top:288px;width:1px;height:18px;background:#808080;"></div>
<div class="c" style="left:552px;top:288px;width:70px;height:17px;background:#c1ffc1;line-height:17px;color:#000;"><i style="right:4px;transform-origin:100% 50%">912.445,97</i></div>
<div class="a" style="left:0px;top:305px;width:622px;height:1px;background:#808080;"></div>
<div class="c" style="left:0px;top:306px;width:65px;height:17px;background:#fff;line-height:17px;color:#000;"><i style="left:4px;transform-origin:0 50%">05.03.2008</i></div>
<div class="a" style="left:65px;top:306px;width:1px;height:18px;background:#808080;"></div>
<div class="c" style="left:66px;top:306px;width:99px;height:17px;background:#fff;line-height:17px;color:#000;"><i style="left:0;right:0;text-align:center;transform-origin:50% 50%">19.05.2008</i></div>
<div class="a" style="left:165px;top:306px;width:1px;height:18px;background:#808080;"></div>
<div class="c" style="left:166px;top:306px;width:97px;height:17px;background:#fff;line-height:17px;color:#000;"><i style="left:4px;transform-origin:0 50%">000000000431727</i></div>
<div class="a" style="left:263px;top:306px;width:1px;height:18px;background:#808080;"></div>
<div class="c" style="left:264px;top:306px;width:136px;height:17px;background:#fff;line-height:17px;color:#000;letter-spacing:.14px;"><i style="left:3px;transform-origin:0 50%">FT.MIZ 00000000A713994</i></div>
<div class="a" style="left:400px;top:306px;width:1px;height:18px;background:#808080;"></div>
<div class="c" style="left:401px;top:306px;width:61px;height:17px;background:#fff;line-height:17px;color:#000;"><i style="right:4px;transform-origin:100% 50%">26.577,66</i></div>
<div class="a" style="left:462px;top:306px;width:1px;height:18px;background:#808080;"></div>
<div class="c" style="left:463px;top:306px;width:88px;height:17px;background:#fff;line-height:17px;color:#000;"><i style="right:4px;transform-origin:100% 50%">0,00000000</i></div>
<div class="a" style="left:551px;top:306px;width:1px;height:18px;background:#808080;"></div>
<div class="c" style="left:552px;top:306px;width:70px;height:17px;background:#fff;line-height:17px;color:#000;"><i style="right:4px;transform-origin:100% 50%">939.023,63</i></div>
<div class="a" style="left:0px;top:323px;width:622px;height:1px;background:#808080;"></div>
<div class="c" style="left:0px;top:324px;width:65px;height:17px;background:#c1ffc1;line-height:17px;color:#000;"><i style="left:4px;transform-origin:0 50%">06.03.2008</i></div>
<div class="a" style="left:65px;top:324px;width:1px;height:18px;background:#808080;"></div>
<div class="c" style="left:66px;top:324px;width:99px;height:17px;background:#c1ffc1;line-height:17px;color:#000;"><i style="left:0;right:0;text-align:center;transform-origin:50% 50%">20.05.2008</i></div>
<div class="a" style="left:165px;top:324px;width:1px;height:18px;background:#808080;"></div>
<div class="c" style="left:166px;top:324px;width:97px;height:17px;background:#c1ffc1;line-height:17px;color:#000;"><i style="left:4px;transform-origin:0 50%">000000000431741</i></div>
<div class="a" style="left:263px;top:324px;width:1px;height:18px;background:#808080;"></div>
<div class="c" style="left:264px;top:324px;width:136px;height:17px;background:#c1ffc1;line-height:17px;color:#000;letter-spacing:.14px;"><i style="left:3px;transform-origin:0 50%">FT.MIZ 00000000A714000</i></div>
<div class="a" style="left:400px;top:324px;width:1px;height:18px;background:#808080;"></div>
<div class="c" style="left:401px;top:324px;width:61px;height:17px;background:#c1ffc1;line-height:17px;color:#000;"><i style="right:4px;transform-origin:100% 50%">26.017,22</i></div>
<div class="a" style="left:462px;top:324px;width:1px;height:18px;background:#808080;"></div>
<div class="c" style="left:463px;top:324px;width:88px;height:17px;background:#c1ffc1;line-height:17px;color:#000;"><i style="right:4px;transform-origin:100% 50%">0,00000000</i></div>
<div class="a" style="left:551px;top:324px;width:1px;height:18px;background:#808080;"></div>
<div class="c" style="left:552px;top:324px;width:70px;height:17px;background:#c1ffc1;line-height:17px;color:#000;"><i style="right:4px;transform-origin:100% 50%">965.040,84</i></div>
<div class="a" style="left:0px;top:341px;width:622px;height:1px;background:#808080;"></div>
<div class="c" style="left:0px;top:342px;width:65px;height:17px;background:#fff;line-height:17px;color:#000;"><i style="left:4px;transform-origin:0 50%">07.03.2008</i></div>
<div class="a" style="left:65px;top:342px;width:1px;height:18px;background:#808080;"></div>
<div class="c" style="left:66px;top:342px;width:99px;height:17px;background:#fff;line-height:17px;color:#000;"><i style="left:0;right:0;text-align:center;transform-origin:50% 50%">21.05.2008</i></div>
<div class="a" style="left:165px;top:342px;width:1px;height:18px;background:#808080;"></div>
<div class="c" style="left:166px;top:342px;width:97px;height:17px;background:#fff;line-height:17px;color:#000;"><i style="left:4px;transform-origin:0 50%">000000000431749</i></div>
<div class="a" style="left:263px;top:342px;width:1px;height:18px;background:#808080;"></div>
<div class="c" style="left:264px;top:342px;width:136px;height:17px;background:#fff;line-height:17px;color:#000;letter-spacing:.14px;"><i style="left:3px;transform-origin:0 50%">FT.MIZ 00000000A714018</i></div>
<div class="a" style="left:400px;top:342px;width:1px;height:18px;background:#808080;"></div>
<div class="c" style="left:401px;top:342px;width:61px;height:17px;background:#fff;line-height:17px;color:#000;"><i style="right:4px;transform-origin:100% 50%">24.486,02</i></div>
<div class="a" style="left:462px;top:342px;width:1px;height:18px;background:#808080;"></div>
<div class="c" style="left:463px;top:342px;width:88px;height:17px;background:#fff;line-height:17px;color:#000;"><i style="right:4px;transform-origin:100% 50%">0,00000000</i></div>
<div class="a" style="left:551px;top:342px;width:1px;height:18px;background:#808080;"></div>
<div class="c" style="left:552px;top:342px;width:70px;height:17px;background:#fff;line-height:17px;color:#000;"><i style="right:4px;transform-origin:100% 50%">989.526,86</i></div>
<div class="a" style="left:0px;top:359px;width:622px;height:1px;background:#808080;"></div>
<div class="c" style="left:0px;top:360px;width:65px;height:17px;background:#c1ffc1;line-height:17px;color:#000;"><i style="left:4px;transform-origin:0 50%">08.03.2008</i></div>
<div class="a" style="left:65px;top:360px;width:1px;height:18px;background:#808080;"></div>
<div class="c" style="left:66px;top:360px;width:99px;height:17px;background:#c1ffc1;line-height:17px;color:#000;"><i style="left:0;right:0;text-align:center;transform-origin:50% 50%">22.05.2008</i></div>
<div class="a" style="left:165px;top:360px;width:1px;height:18px;background:#808080;"></div>
<div class="c" style="left:166px;top:360px;width:97px;height:17px;background:#c1ffc1;line-height:17px;color:#000;"><i style="left:4px;transform-origin:0 50%">000000000248085</i></div>
<div class="a" style="left:263px;top:360px;width:1px;height:18px;background:#808080;"></div>
<div class="c" style="left:264px;top:360px;width:136px;height:17px;background:#c1ffc1;line-height:17px;color:#000;letter-spacing:.14px;"><i style="left:3px;transform-origin:0 50%">FT.MIZ 00000000A714097</i></div>
<div class="a" style="left:400px;top:360px;width:1px;height:18px;background:#808080;"></div>
<div class="c" style="left:401px;top:360px;width:61px;height:17px;background:#c1ffc1;line-height:17px;color:#000;"><i style="right:4px;transform-origin:100% 50%">30.548,15</i></div>
<div class="a" style="left:462px;top:360px;width:1px;height:18px;background:#808080;"></div>
<div class="c" style="left:463px;top:360px;width:88px;height:17px;background:#c1ffc1;line-height:17px;color:#000;"><i style="right:4px;transform-origin:100% 50%">0,00000000</i></div>
<div class="a" style="left:551px;top:360px;width:1px;height:18px;background:#808080;"></div>
<div class="c" style="left:552px;top:360px;width:70px;height:17px;background:#c1ffc1;line-height:17px;color:#000;"><i style="right:4px;transform-origin:100% 50%">1.020.075,01</i></div>
<div class="a" style="left:0px;top:377px;width:622px;height:1px;background:#808080;"></div>
</div>
<div class="a" style="left:537px;top:399px;width:1px;height:384px;background:#fff;"></div>
<div class="trk" style="left:1159px;top:399px;width:16px;height:384px"></div>
<div class="sb" style="left:1159px;top:399px;width:16px;height:16px"></div>
<div class="tri" style="left:1163px;top:405px;border-left:3.5px solid transparent;border-right:3.5px solid transparent;border-bottom:4px solid #000"></div>
<div class="sb" style="left:1159px;top:767px;width:16px;height:16px"></div>
<div class="tri" style="left:1163px;top:773px;border-left:3.5px solid transparent;border-right:3.5px solid transparent;border-top:4px solid #000"></div>
<div class="sb" style="left:1159px;top:571px;width:16px;height:117px"></div>
<div class="trk" style="left:537px;top:783px;width:622px;height:16px"></div>
<div class="sb" style="left:537px;top:783px;width:16px;height:16px"></div>
<div class="tri" style="left:542px;top:787px;border-top:3.5px solid transparent;border-bottom:3.5px solid transparent;border-right:4px solid #000"></div>
<div class="sb" style="left:1143px;top:783px;width:16px;height:16px"></div>
<div class="tri" style="left:1149px;top:787px;border-top:3.5px solid transparent;border-bottom:3.5px solid transparent;border-left:4px solid #000"></div>
<div class="sb" style="left:553px;top:783px;width:588px;height:16px"></div>
<div class="a" style="left:1159px;top:783px;width:16px;height:16px;background:#d4d0c8;"></div>
</body></html>
